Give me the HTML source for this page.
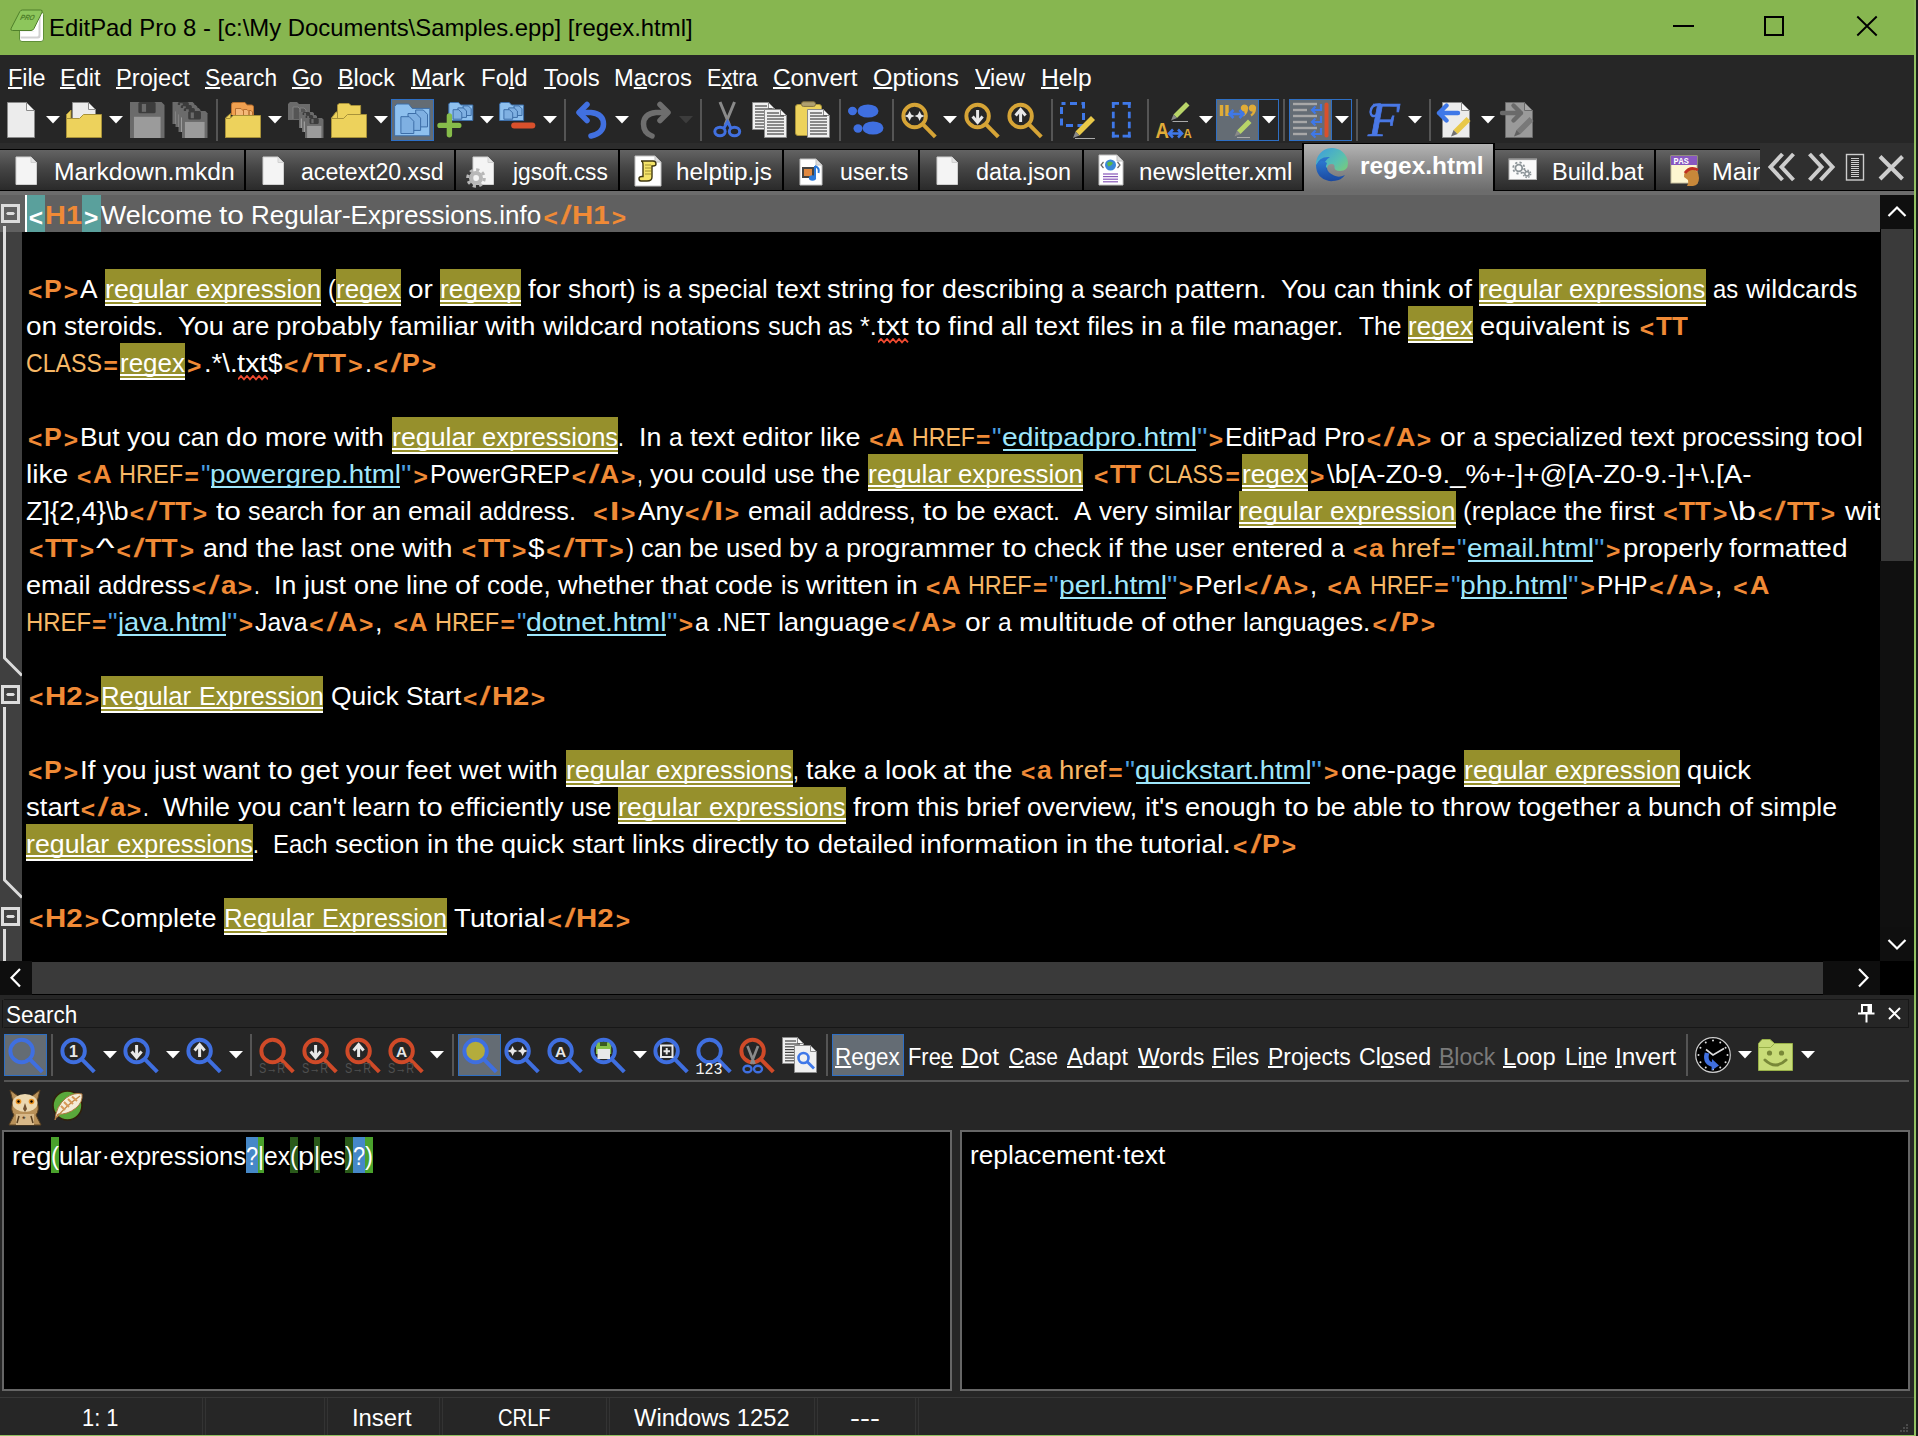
<!DOCTYPE html>
<html><head><meta charset="utf-8"><title>EditPad Pro 8</title><style>
html,body{margin:0;padding:0;background:#262626;}
#r{position:relative;width:1918px;height:1436px;overflow:hidden;background:#262626;font-family:"Liberation Sans", sans-serif;}
#r div,#r svg,#r span.tx{position:absolute;}
#r div{box-sizing:content-box;}
.tx{white-space:pre;transform-origin:0 0;display:block;font-family:"Liberation Sans", sans-serif;}
.mn u{text-decoration:underline;text-decoration-thickness:1.6px;text-underline-offset:1.2px;text-decoration-skip-ink:none;}
</style></head><body><div id="r">
<div style="left:0px;top:0px;width:1918px;height:55px;background:#87b650;"></div>
<div style="left:1914px;top:55px;width:2px;height:1381px;background:#93c162;"></div>
<div style="left:1916px;top:0px;width:2px;height:1436px;background:#1c1c1c;"></div>
<div style="left:1914px;top:0px;width:2px;height:55px;background:#8fbd5c;"></div>
<div style="left:0px;top:1435px;width:1916px;height:1px;background:#93c162;"></div>
<svg style="left:10px;top:9px;" width="36" height="35" viewBox="0 0 36 35"><path d="M11.5 3 H31 Q33.5 3 33.5 5.5 V30 Q33.5 32.5 31 32.5 H12 Q9.5 32.5 9.5 30 V20 Z" fill="#ffffff" stroke="#5f8f38" stroke-width="1"/><path d="M10.5 22.5 H24.5 Q28.5 22 29.5 8 L30.5 6 V27 Q30.5 29.5 28 29.5 H10.5 Z" fill="#d2d2d2"/><path d="M10.5 22.5 H24 Q27.5 22 28.5 9 V26 Q28.5 27.500 27 27.500 H10.5 Z" fill="#ffffff"/><path d="M12.5 1 H30.5 Q33 1 32 3.300 L24 19.500 Q23 21.5 21 21.5 H2.5 Q0 21.5 1.200 19.200 L9.800 2.600 Q10.600 1 12.5 1 Z" fill="#8dc65c" stroke="#4f7f2a" stroke-width="1"/><text x="13" y="11" font-family="Liberation Sans, sans-serif" font-size="7.5" font-weight="700" font-style="italic" fill="#4f7f2a" transform="skewX(-16)" textLength="14" lengthAdjust="spacingAndGlyphs">PRO</text></svg>
<span class="tx " style="left:48.61px;top:11.68px;font-size:24px;line-height:31.2px;font-weight:400;color:#000;transform:scaleX(0.9948);">EditPad Pro 8 - [c:\My Documents\Samples.epp] [regex.html]</span>
<div style="left:1673px;top:25px;width:21px;height:2px;background:#000;"></div>
<div style="left:1764px;top:16px;width:16px;height:16px;border:2px solid #000;background:none"></div>
<svg style="left:1855px;top:14px" width="24" height="24" viewBox="0 0 24 24"><path d="M2.3 2.5 L21.7 21.5 M21.7 2.5 L2.3 21.5" stroke="#000" stroke-width="1.9" fill="none"/></svg>
<span class="tx mn" style="left:7.51px;top:62.58px;font-size:23.5px;line-height:30.55px;font-weight:400;color:#fff;transform:scaleX(0.9919);"><u>F</u>ile</span>
<span class="tx mn" style="left:60.00px;top:62.58px;font-size:23.5px;line-height:30.55px;font-weight:400;color:#fff;"><u>E</u>dit</span>
<span class="tx mn" style="left:115.99px;top:62.58px;font-size:23.5px;line-height:30.55px;font-weight:400;color:#fff;transform:scaleX(1.0054);"><u>P</u>roject</span>
<span class="tx mn" style="left:205.03px;top:62.58px;font-size:23.5px;line-height:30.55px;font-weight:400;color:#fff;transform:scaleX(0.9670);"><u>S</u>earch</span>
<span class="tx mn" style="left:292.03px;top:62.58px;font-size:23.5px;line-height:30.55px;font-weight:400;color:#fff;transform:scaleX(0.9743);"><u>G</u>o</span>
<span class="tx mn" style="left:338.01px;top:62.58px;font-size:23.5px;line-height:30.55px;font-weight:400;color:#fff;transform:scaleX(0.9874);"><u>B</u>lock</span>
<span class="tx mn" style="left:410.97px;top:62.58px;font-size:23.5px;line-height:30.55px;font-weight:400;color:#fff;transform:scaleX(1.0297);"><u>M</u>ark</span>
<span class="tx mn" style="left:480.98px;top:62.58px;font-size:23.5px;line-height:30.55px;font-weight:400;color:#fff;transform:scaleX(1.0196);">Fo<u>l</u>d</span>
<span class="tx mn" style="left:543.50px;top:62.58px;font-size:23.5px;line-height:30.55px;font-weight:400;color:#fff;transform:scaleX(1.0164);"><u>T</u>ools</span>
<span class="tx mn" style="left:613.99px;top:62.58px;font-size:23.5px;line-height:30.55px;font-weight:400;color:#fff;transform:scaleX(1.0094);">M<u>a</u>cros</span>
<span class="tx mn" style="left:706.58px;top:62.58px;font-size:23.5px;line-height:30.55px;font-weight:400;color:#fff;transform:scaleX(0.9219);">E<u>x</u>tra</span>
<span class="tx mn" style="left:772.97px;top:62.58px;font-size:23.5px;line-height:30.55px;font-weight:400;color:#fff;transform:scaleX(1.0275);"><u>C</u>onvert</span>
<span class="tx mn" style="left:872.94px;top:62.58px;font-size:23.5px;line-height:30.55px;font-weight:400;color:#fff;transform:scaleX(1.0601);"><u>O</u>ptions</span>
<span class="tx mn" style="left:975.00px;top:62.58px;font-size:23.5px;line-height:30.55px;font-weight:400;color:#fff;transform:scaleX(0.9895);"><u>V</u>iew</span>
<span class="tx mn" style="left:1041.45px;top:62.58px;font-size:23.5px;line-height:30.55px;font-weight:400;color:#fff;transform:scaleX(1.0474);"><u>H</u>elp</span>
<svg style="left:6px;top:101px;" width="31" height="38" viewBox="0 0 31 38"><path d="M1.5 1.5 H20.5 L28.5 9.5 V36.5 H1.5 Z" fill="#ececec" stroke="#8a8a8a" stroke-width="1"/><path d="M20.5 1.5 V9.5 H28.5 Z" fill="#f6f6f6" stroke="#8a8a8a" stroke-width="1"/></svg>
<svg style="left:46px;top:116px;" width="14" height="8" viewBox="0 0 14 8"><path d="M0 0 H14 L7 7.5 Z" fill="#fff"/></svg>
<svg style="left:65px;top:101px;" width="38" height="38" viewBox="0 0 38 38"><path d="M7.5 1.5 H23.5 L30.5 8.5 V21.5 H7.5 Z" fill="#ececec" stroke="#8a8a8a" stroke-width="1"/><path d="M23.5 1.5 V8.5 H30.5 Z" fill="#f6f6f6" stroke="#8a8a8a" stroke-width="1"/><path d="M1.5 36.5 V13.5 L6 9 V17" fill="#edd25c" stroke="#a8923a"/><path d="M1.5 36.5 V17.5 H14.5 L18.5 13.5 H36.5 V36.5 Z" fill="#edd25c" stroke="#a8923a" stroke-width="1"/></svg>
<svg style="left:109px;top:116px;" width="14" height="8" viewBox="0 0 14 8"><path d="M0 0 H14 L7 7.5 Z" fill="#fff"/></svg>
<svg style="left:129px;top:101px;" width="37" height="38" viewBox="0 0 37 38"><path d="M1 1 H32.542857142857144 L35.5 3.9571428571428573 V37 H1 Z" fill="#6b6b6b"/><rect x="4.942857142857143" y="15.785714285714286" width="26.614285714285714" height="21.214285714285715" fill="#9b9b9b"/><rect x="9.37857142857143" y="1" width="17.25" height="11.335714285714285" rx="1.5" fill="#3c3c3c"/><rect x="12.82857142857143" y="2.9714285714285715" width="4.238571428571428" height="7.885714285714286" fill="#6b6b6b"/></svg>
<svg style="left:171px;top:101px;" width="38" height="38" viewBox="0 0 38 38"><path d="M1.5 1 H21.614285714285714 L23.5 2.8857142857142857 V23 H1.5 Z" fill="#6b6b6b"/><rect x="4.014285714285714" y="10.428571428571429" width="16.97142857142857" height="12.571428571428571" fill="#9b9b9b"/><rect x="6.8428571428571425" y="1" width="11.0" height="7.228571428571429" rx="1.5" fill="#3c3c3c"/><rect x="9.042857142857143" y="2.257142857142857" width="2.702857142857143" height="5.0285714285714285" fill="#6b6b6b"/><path d="M4.5 4 H24.614285714285714 L26.5 5.885714285714286 V26 H4.5 Z" fill="#6b6b6b"/><rect x="7.014285714285714" y="13.428571428571429" width="16.97142857142857" height="12.571428571428571" fill="#9b9b9b"/><rect x="9.842857142857142" y="4" width="11.0" height="7.228571428571429" rx="1.5" fill="#3c3c3c"/><rect x="12.042857142857143" y="5.257142857142857" width="2.702857142857143" height="5.0285714285714285" fill="#6b6b6b"/><path d="M7.5 7 H27.614285714285714 L29.5 8.885714285714286 V31 H7.5 Z" fill="#6b6b6b"/><rect x="10.014285714285714" y="16.42857142857143" width="16.97142857142857" height="14.571428571428571" fill="#9b9b9b"/><rect x="12.842857142857142" y="7" width="11.0" height="7.228571428571429" rx="1.5" fill="#3c3c3c"/><rect x="15.042857142857143" y="8.257142857142856" width="2.702857142857143" height="5.0285714285714285" fill="#6b6b6b"/><path d="M11 10 H34.31428571428572 L36.5 12.185714285714285 V37 H11 Z" fill="#6b6b6b"/><rect x="13.914285714285715" y="20.92857142857143" width="19.67142857142857" height="16.07142857142857" fill="#9b9b9b"/><rect x="17.192857142857143" y="10" width="12.75" height="8.378571428571428" rx="1.5" fill="#3c3c3c"/><rect x="19.74285714285714" y="11.457142857142857" width="3.1328571428571426" height="5.828571428571428" fill="#6b6b6b"/></svg>
<div style="left:216px;top:99px;width:2px;height:42px;background:#555;"></div>
<svg style="left:224px;top:101px;" width="38" height="38" viewBox="0 0 38 38"><path d="M7.5 14 V3.5 Q7.5 1.5 9.5 1.5 H21 L23 4 H27.5 Q29.5 4 29.5 6 V14" fill="#f0a050" stroke="#b87030"/><path d="M11.5 16 V7.5 H17 L19.5 10 V16 M19.5 16 V8.5 H23 L25 10.5 V16 M25 16 V9.5 H27 L28.5 11 V16" fill="#f4b878" stroke="#b87030" stroke-width="1"/><path d="M1.5 36.5 V17 L6.5 12.5 V17" fill="#edd25c" stroke="#a8923a"/><path d="M1.5 36.5 V17.5 H6 L9 14.5 H36.5 V36.5 Z" fill="#edd25c" stroke="#a8923a" stroke-width="1"/></svg>
<svg style="left:267.5px;top:116px;" width="14" height="8" viewBox="0 0 14 8"><path d="M0 0 H14 L7 7.5 Z" fill="#fff"/></svg>
<svg style="left:287px;top:101px;" width="38" height="38" viewBox="0 0 38 38"><path d="M1 19 V3 L3 1 H10 L12 3 H23 V19 Z" fill="#6b6b6b"/><path d="M6 18 V6 H11 L13 8 V18 M13 18 V7 H17 L19 9 V18" fill="#555" stroke="#808080" stroke-width="1"/><path d="M12 11 H25.714285714285715 L27 12.285714285714285 V27 H12 Z" fill="#6b6b6b"/><rect x="13.714285714285714" y="17.428571428571427" width="11.571428571428571" height="9.571428571428573" fill="#9b9b9b"/><rect x="15.642857142857142" y="11" width="7.5" height="4.928571428571428" rx="1.5" fill="#3c3c3c"/><rect x="17.142857142857142" y="11.857142857142858" width="1.8428571428571427" height="3.4285714285714284" fill="#6b6b6b"/><path d="M15 14 H28.714285714285715 L30 15.285714285714285 V31 H15 Z" fill="#6b6b6b"/><rect x="16.714285714285715" y="20.428571428571427" width="11.571428571428571" height="10.571428571428573" fill="#9b9b9b"/><rect x="18.642857142857142" y="14" width="7.5" height="4.928571428571428" rx="1.5" fill="#3c3c3c"/><rect x="20.142857142857142" y="14.857142857142858" width="1.8428571428571427" height="3.4285714285714284" fill="#6b6b6b"/><path d="M18 17 H34.91428571428571 L36.5 18.585714285714285 V37 H18 Z" fill="#6b6b6b"/><rect x="20.114285714285714" y="24.92857142857143" width="14.271428571428572" height="12.071428571428571" fill="#9b9b9b"/><rect x="22.492857142857144" y="17" width="9.25" height="6.078571428571428" rx="1.5" fill="#3c3c3c"/><rect x="24.34285714285714" y="18.057142857142857" width="2.2728571428571427" height="4.228571428571429" fill="#6b6b6b"/></svg>
<svg style="left:330px;top:101px;" width="38" height="38" viewBox="0 0 38 38"><path d="M7.5 18 V4 L9 2.500 H19 L21 4.500 H30.600 V16 Z" fill="#edd25c" stroke="#a8923a"/><path d="M1.500 36.500 V17 L6 11 H7.500 V17" fill="#edd25c" stroke="#a8923a"/><path d="M1.500 36.500 V17.500 H13.500 L17.500 13.500 H36.500 V36.500 Z" fill="#edd25c" stroke="#a8923a" stroke-width="1"/></svg>
<svg style="left:374px;top:116px;" width="14" height="8" viewBox="0 0 14 8"><path d="M0 0 H14 L7 7.5 Z" fill="#fff"/></svg>
<div style="left:391px;top:99px;width:43px;height:42px;background:#646c74;box-sizing:border-box;border:1.5px solid #2e6fc4;"></div>
<svg style="left:393px;top:102px;" width="38" height="37" viewBox="0 0 38 37"><path d="M1.6 33.8 V4.5 L3.7 2.0 H15.7 L19.2 6.4 H36.8 V33.8 Z" fill="#8ec0ee" stroke="#3d6ea8" stroke-width="1"/><path d="M22.7 8.0 H30.3 L34.5 12.3 V24.9 H22.7 Z" fill="#7fb0e2" stroke="#3d6ea8" stroke-width="1"/><path d="M15.0 11.5 H23.1 L27.6 16.1 V28.4 H15.0 Z" fill="#7fb0e2" stroke="#3d6ea8" stroke-width="1"/><path d="M7.9 14.7 H16.2 L20.8 19.3 V31.5 H7.9 Z" fill="#7fb0e2" stroke="#3d6ea8" stroke-width="1"/></svg>
<svg style="left:436px;top:101px;" width="38" height="38" viewBox="0 0 38 38"><path d="M12.8 19.5 V2.9 L14.2 1.5 H22.4 L24.8 4.0 H36.8 V19.5 Z" fill="#8ec0ee" stroke="#3d6ea8" stroke-width="1"/><path d="M27.1 4.9 H32.3 L35.2 7.8 V14.5 H27.1 Z" fill="#7fb0e2" stroke="#3d6ea8" stroke-width="1"/><path d="M21.9 6.9 H27.4 L30.5 10.0 V16.4 H21.9 Z" fill="#7fb0e2" stroke="#3d6ea8" stroke-width="1"/><path d="M17.1 8.7 H22.7 L25.8 11.9 V18.2 H17.1 Z" fill="#7fb0e2" stroke="#3d6ea8" stroke-width="1"/><path d="M13.4 15 V33.700 M4 24.400 H22.800" stroke="#86bc4a" stroke-width="5.4" stroke-linecap="round"/></svg>
<svg style="left:480px;top:116px;" width="14" height="8" viewBox="0 0 14 8"><path d="M0 0 H14 L7 7.5 Z" fill="#fff"/></svg>
<svg style="left:499px;top:101px;" width="38" height="38" viewBox="0 0 38 38"><path d="M0.6 19.5 V2.9 L2.0 1.5 H10.2 L12.6 4.0 H24.6 V19.5 Z" fill="#8ec0ee" stroke="#3d6ea8" stroke-width="1"/><path d="M15.0 4.9 H20.1 L23.0 7.8 V14.5 H15.0 Z" fill="#7fb0e2" stroke="#3d6ea8" stroke-width="1"/><path d="M9.7 6.9 H15.2 L18.4 10.0 V16.4 H9.7 Z" fill="#7fb0e2" stroke="#3d6ea8" stroke-width="1"/><path d="M4.9 8.7 H10.5 L13.7 11.9 V18.2 H4.9 Z" fill="#7fb0e2" stroke="#3d6ea8" stroke-width="1"/><path d="M15.200 24.500 H33.300" stroke="#d8502c" stroke-width="6" stroke-linecap="round"/></svg>
<svg style="left:542.5px;top:116px;" width="14" height="8" viewBox="0 0 14 8"><path d="M0 0 H14 L7 7.5 Z" fill="#fff"/></svg>
<div style="left:564px;top:99px;width:2px;height:42px;background:#555;"></div>
<svg style="left:574px;top:100px;" width="36" height="40" viewBox="0 0 36 40"><path d="M13 4.5 L5 12.5 L13 20.5" stroke="#4170e0" stroke-width="5.5" fill="none" stroke-linecap="round" stroke-linejoin="round"/><path d="M6 12.5 H17 Q29.5 14 29.5 24 Q29.5 33 17 36" stroke="#4170e0" stroke-width="5.5" fill="none" stroke-linecap="round"/></svg>
<svg style="left:615px;top:116px;" width="14" height="8" viewBox="0 0 14 8"><path d="M0 0 H14 L7 7.5 Z" fill="#fff"/></svg>
<svg style="left:637px;top:100px;" width="36" height="40" viewBox="0 0 36 40"><path d="M23 4.5 L31 12.5 L23 20.5" stroke="#6e6e6e" stroke-width="5.5" fill="none" stroke-linecap="round" stroke-linejoin="round"/><path d="M30 12.5 H19 Q6.5 14 6.5 24 Q6.5 33 15 36" stroke="#6e6e6e" stroke-width="5.5" fill="none" stroke-linecap="round"/></svg>
<svg style="left:679px;top:116px;" width="14" height="8" viewBox="0 0 14 8"><path d="M0 0 H14 L7 7.5 Z" fill="#3c3c3c"/></svg>
<div style="left:700px;top:99px;width:2px;height:42px;background:#555;"></div>
<svg style="left:712px;top:101px;" width="31" height="38" viewBox="0 0 31 38"><path d="M8 1 L17.5 24 M22.5 1 L13 24" stroke="#8a8a8a" stroke-width="3"/><ellipse cx="8" cy="30.5" rx="5.2" ry="4.2" fill="none" stroke="#4170e0" stroke-width="3"/><ellipse cx="22.5" cy="30.5" rx="5.2" ry="4.2" fill="none" stroke="#4170e0" stroke-width="3"/><path d="M12 27 L15.5 21 L19 27" stroke="#4170e0" stroke-width="3" fill="none"/></svg>
<svg style="left:751px;top:101px;" width="38" height="38" viewBox="0 0 38 38"><path d="M1.5 1.5 H17.5 L23.5 7.5 V28.5 H1.5 Z" fill="#f0f0f0" stroke="#8a8a8a" stroke-width="1"/><path d="M17.5 1.5 V7.5 H23.5 Z" fill="#f6f6f6" stroke="#8a8a8a" stroke-width="1"/><path d="M4 5 H16" stroke="#444" stroke-width="1.2"/><path d="M4 8 H21" stroke="#444" stroke-width="1.2"/><path d="M4 11 H21" stroke="#444" stroke-width="1.2"/><path d="M4 14 H21" stroke="#444" stroke-width="1.2"/><path d="M4 17 H21" stroke="#444" stroke-width="1.2"/><path d="M4 20 H21" stroke="#444" stroke-width="1.2"/><path d="M4 23 H21" stroke="#444" stroke-width="1.2"/><path d="M4 26 H21" stroke="#444" stroke-width="1.2"/><path d="M13.5 8.5 H29.5 L35.5 14.5 V36.5 H13.5 Z" fill="#f0f0f0" stroke="#8a8a8a" stroke-width="1"/><path d="M29.5 8.5 V14.5 H35.5 Z" fill="#f6f6f6" stroke="#8a8a8a" stroke-width="1"/><path d="M16 12 H28" stroke="#444" stroke-width="1.2"/><path d="M16 15 H33" stroke="#444" stroke-width="1.2"/><path d="M16 18 H33" stroke="#444" stroke-width="1.2"/><path d="M16 21 H33" stroke="#444" stroke-width="1.2"/><path d="M16 24 H33" stroke="#444" stroke-width="1.2"/><path d="M16 27 H33" stroke="#444" stroke-width="1.2"/><path d="M16 30 H33" stroke="#444" stroke-width="1.2"/><path d="M16 33 H33" stroke="#444" stroke-width="1.2"/></svg>
<svg style="left:794px;top:101px;" width="38" height="38" viewBox="0 0 38 38"><rect x="1.5" y="3.5" width="26" height="31" rx="2.5" fill="#edd25c" stroke="#a8923a"/><rect x="7.5" y="0.8" width="14" height="4.6" rx="2" fill="#b0a070" stroke="#807040"/><path d="M13.5 8.5 H29.5 L35.5 14.5 V36.5 H13.5 Z" fill="#f0f0f0" stroke="#8a8a8a" stroke-width="1"/><path d="M29.5 8.5 V14.5 H35.5 Z" fill="#f6f6f6" stroke="#8a8a8a" stroke-width="1"/><path d="M16 12 H28" stroke="#444" stroke-width="1.2"/><path d="M16 15 H33" stroke="#444" stroke-width="1.2"/><path d="M16 18 H33" stroke="#444" stroke-width="1.2"/><path d="M16 21 H33" stroke="#444" stroke-width="1.2"/><path d="M16 24 H33" stroke="#444" stroke-width="1.2"/><path d="M16 27 H33" stroke="#444" stroke-width="1.2"/><path d="M16 30 H33" stroke="#444" stroke-width="1.2"/><path d="M16 33 H33" stroke="#444" stroke-width="1.2"/></svg>
<div style="left:839px;top:99px;width:2px;height:42px;background:#555;"></div>
<svg style="left:847px;top:102px;" width="38" height="37" viewBox="0 0 38 37"><ellipse cx="21" cy="9" rx="10.5" ry="6.6" fill="#3f6fe0"/><ellipse cx="5.5" cy="9" rx="4.5" ry="4.2" fill="#3f6fe0"/><ellipse cx="26" cy="26" rx="10.5" ry="6.6" fill="#3f6fe0"/><ellipse cx="11" cy="26.5" rx="4.5" ry="4.2" fill="#3f6fe0"/></svg>
<div style="left:892px;top:99px;width:2px;height:42px;background:#555;"></div>
<svg style="left:901px;top:102px;" width="37" height="37" viewBox="0 0 37 37"><circle cx="13.6" cy="14" r="11.25" fill="none" stroke="#d6a436" stroke-width="3.9"/><path d="M22 22.4 L34.3 34.8" stroke="#d6a436" stroke-width="4.0" stroke-linecap="butt"/><path d="M8.6 9 L10.2 12.4 L13.6 14 L10.2 15.6 L8.6 19 L7.0 15.6 L3.5999999999999996 14 L7.0 12.4 Z" fill="#e8e8e8"/><path d="M18.6 9 L20.200000000000003 12.4 L23.6 14 L20.200000000000003 15.6 L18.6 19 L17.0 15.6 L13.600000000000001 14 L17.0 12.4 Z" fill="#e8e8e8"/></svg>
<svg style="left:943px;top:116px;" width="14" height="8" viewBox="0 0 14 8"><path d="M0 0 H14 L7 7.5 Z" fill="#fff"/></svg>
<svg style="left:964px;top:102px;" width="37" height="37" viewBox="0 0 37 37"><circle cx="13.6" cy="14" r="11.25" fill="none" stroke="#d6a436" stroke-width="3.9"/><path d="M22 22.4 L34.3 34.8" stroke="#d6a436" stroke-width="4.0" stroke-linecap="butt"/><path d="M13.6 8.0 V19.0" stroke="#e8e8e8" stroke-width="3"/><path d="M8.6 14.5 L13.6 20.5 L18.6 14.5" stroke="#e8e8e8" stroke-width="3" fill="none"/></svg>
<svg style="left:1007px;top:102px;" width="37" height="37" viewBox="0 0 37 37"><circle cx="13.6" cy="14" r="11.25" fill="none" stroke="#d6a436" stroke-width="3.9"/><path d="M22 22.4 L34.3 34.8" stroke="#d6a436" stroke-width="4.0" stroke-linecap="butt"/><path d="M13.6 20.0 V9.0" stroke="#e8e8e8" stroke-width="3"/><path d="M8.6 13.5 L13.6 7.5 L18.6 13.5" stroke="#e8e8e8" stroke-width="3" fill="none"/></svg>
<div style="left:1051px;top:99px;width:2px;height:42px;background:#555;"></div>
<svg style="left:1059px;top:101px;" width="38" height="38" viewBox="0 0 38 38"><path d="M2.5 2.5 H24.5 V24.5 H2.5 Z" fill="none" stroke="#3f78e8" stroke-width="3" stroke-dasharray="7 4.5" stroke-dashoffset="3"/><path d="M32 15 L36 19 L20.5 34.5 L16.5 30.5 Z" fill="#e8c848"/><path d="M16.5 30.5 L20.5 34.5 L14 37 Z" fill="#8a8a8a"/><path d="M16 37.5 H36" stroke="#aaa" stroke-width="1"/></svg>
<svg style="left:1110px;top:101px;" width="22" height="38" viewBox="0 0 22 38"><path d="M3.3 1 V7" stroke="#3f78e8" stroke-width="2.8"/><path d="M3.3 10.7 V17.3" stroke="#3f78e8" stroke-width="2.8"/><path d="M3.3 20.7 V27.3" stroke="#3f78e8" stroke-width="2.8"/><path d="M3.3 30.7 V36.5" stroke="#3f78e8" stroke-width="2.8"/><path d="M19.3 1 V7" stroke="#3f78e8" stroke-width="2.8"/><path d="M19.3 10.7 V17.3" stroke="#3f78e8" stroke-width="2.8"/><path d="M19.3 20.7 V27.3" stroke="#3f78e8" stroke-width="2.8"/><path d="M19.3 30.7 V36.5" stroke="#3f78e8" stroke-width="2.8"/><path d="M1.9 2.4 H9" stroke="#3f78e8" stroke-width="2.8"/><path d="M12.6 2.4 H20.7" stroke="#3f78e8" stroke-width="2.8"/><path d="M1.9 35.1 H9" stroke="#3f78e8" stroke-width="2.8"/><path d="M12.6 35.1 H20.7" stroke="#3f78e8" stroke-width="2.8"/></svg>
<div style="left:1147px;top:99px;width:2px;height:42px;background:#555;"></div>
<svg style="left:1155px;top:101px;" width="38" height="38" viewBox="0 0 38 38"><path d="M31 1 L34.5 4.5 L22 17 L18.5 13.5 Z" fill="#b8d468"/><path d="M18.5 13.5 L22 17 L16 19.5 Z" fill="#8a8a8a"/><path d="M17.5 20.5 H33" stroke="#aaa" stroke-width="1"/><text x="0.5" y="37.3" font-family="Liberation Sans, sans-serif" font-size="21.5" font-weight="700" fill="#e0ac38" textLength="13.5" lengthAdjust="spacingAndGlyphs">A</text><text x="28.3" y="37.3" font-family="Liberation Sans, sans-serif" font-size="13" font-weight="700" fill="#e0ac38" textLength="8.5" lengthAdjust="spacingAndGlyphs">A</text><path d="M15 32.5 H26 M18 28.5 L14 32.5 L18 36.5 M23 28.5 L27 32.5 L23 36.5" stroke="#3f78e8" stroke-width="2.6" fill="none"/></svg>
<svg style="left:1199px;top:116px;" width="14" height="8" viewBox="0 0 14 8"><path d="M0 0 H14 L7 7.5 Z" fill="#fff"/></svg>
<div style="left:1216px;top:99px;width:63px;height:42px;background:#262626;box-sizing:border-box;border:1.5px solid #2e6fc4;"></div>
<div style="left:1216px;top:99px;width:43px;height:42px;background:#646c74;box-sizing:border-box;border:1.5px solid #2e6fc4;"></div>
<svg style="left:1218px;top:101px;" width="40" height="38" viewBox="0 0 40 38"><path d="M3.5 4 V15 M9 4 V15" stroke="#e0ac38" stroke-width="3.4"/><path d="M26.5 4.5 a2.6 2.6 0 1 1 -0.1 0 M29 7 Q29 12 25 14.5 M34.500 4.500 a2.6 2.6 0 1 1 -0.1 0 M37 7 Q37 12 33 14.5" stroke="#e0ac38" stroke-width="2.2" fill="#e0ac38"/><path d="M12.5 13 H24.5 M15.5 9 L11.5 13 L15.5 17 M21.5 9 L25.5 13 L21.5 17" stroke="#3f78e8" stroke-width="2.6" fill="none"/><path d="M30 18.5 L33.5 22 L22.5 33 L19 29.5 Z" fill="#b8d468"/><path d="M19 29.5 L22.500 33 L16.5 35.5 Z" fill="#8a8a8a"/><path d="M19 36.5 H32" stroke="#aaa" stroke-width="1"/></svg>
<svg style="left:1262px;top:116px;" width="14" height="8" viewBox="0 0 14 8"><path d="M0 0 H14 L7 7.5 Z" fill="#fff"/></svg>
<div style="left:1283px;top:99px;width:2px;height:42px;background:#555;"></div>
<div style="left:1289px;top:99px;width:63px;height:42px;background:#262626;box-sizing:border-box;border:1.5px solid #2e6fc4;"></div>
<div style="left:1289px;top:99px;width:43px;height:42px;background:#646c74;box-sizing:border-box;border:1.5px solid #2e6fc4;"></div>
<svg style="left:1291px;top:101px;" width="40" height="38" viewBox="0 0 40 38"><path d="M2 3 H26" stroke="#a8a8a8" stroke-width="2.4"/><path d="M2 9 H16" stroke="#a8a8a8" stroke-width="2.4"/><path d="M2 15 H26" stroke="#a8a8a8" stroke-width="2.4"/><path d="M2 21 H16" stroke="#a8a8a8" stroke-width="2.4"/><path d="M2 27 H26" stroke="#a8a8a8" stroke-width="2.4"/><path d="M2 33 H16" stroke="#a8a8a8" stroke-width="2.4"/><path d="M30 3 V9 H21 M24.5 5.5 L21 9 L24.5 12.5" stroke="#3f78e8" stroke-width="2.2" fill="none"/><path d="M30 15 V21 H21 M24.5 17.5 L21 21 L24.5 24.5" stroke="#3f78e8" stroke-width="2.2" fill="none"/><path d="M30 27 V33 H21 M24.5 29.5 L21 33 L24.5 36.5" stroke="#3f78e8" stroke-width="2.2" fill="none"/><path d="M35.5 3.500 V34.500" stroke="#d8502c" stroke-width="4" stroke-linecap="round"/></svg>
<svg style="left:1335px;top:116px;" width="14" height="8" viewBox="0 0 14 8"><path d="M0 0 H14 L7 7.5 Z" fill="#fff"/></svg>
<div style="left:1356px;top:99px;width:2px;height:42px;background:#555;"></div>
<span class="tx" style="left:1368px;top:92px;font-family:'Liberation Serif',serif;font-style:italic;font-weight:400;font-size:48px;line-height:56px;color:#4a78e6;transform:scaleX(1.08);-webkit-text-stroke:0.7px #4a78e6">F</span>
<svg style="left:1367px;top:101px;" width="16" height="20" viewBox="0 0 16 20"><path d="M13 3.500 Q4 3 3.500 11 Q4 16.500 9 14.500" stroke="#4a78e6" stroke-width="2.400" fill="none" stroke-linecap="round"/></svg>
<svg style="left:1407.5px;top:116px;" width="14" height="8" viewBox="0 0 14 8"><path d="M0 0 H14 L7 7.5 Z" fill="#fff"/></svg>
<div style="left:1429px;top:99px;width:2px;height:42px;background:#555;"></div>
<svg style="left:1436px;top:101px;" width="38" height="38" viewBox="0 0 38 38"><path d="M6.5 1.5 H25.5 L33.5 9.5 V36.5 H6.5 Z" fill="#ececec" stroke="#8a8a8a" stroke-width="1"/><path d="M25.5 1.5 V9.5 H33.5 Z" fill="#f6f6f6" stroke="#8a8a8a" stroke-width="1"/><path d="M3 12 H22 M10.500 4.500 L3 12 L10.5 19.5" stroke="#3f78e8" stroke-width="4.4" fill="none" stroke-linecap="round" stroke-linejoin="round"/><path d="M30.5 16 L34.5 20 L21.5 33 L17.5 29 Z" fill="#e8c848"/><path d="M17.5 29 L21.5 33 L15 35.5 Z" fill="#707070"/></svg>
<svg style="left:1481px;top:116px;" width="14" height="8" viewBox="0 0 14 8"><path d="M0 0 H14 L7 7.5 Z" fill="#fff"/></svg>
<svg style="left:1499px;top:101px;" width="38" height="38" viewBox="0 0 38 38"><path d="M6.5 1.5 H25.5 L33.5 9.5 V36.5 H6.5 Z" fill="#9a9a9a" stroke="#6a6a6a" stroke-width="1"/><path d="M25.5 1.5 V9.5 H33.5 Z" fill="#a8a8a8" stroke="#6a6a6a" stroke-width="1"/><path d="M3 12 H22 M14.500 4.500 L22 12 L14.5 19.5" stroke="#6a6a6a" stroke-width="4.4" fill="none" stroke-linecap="round" stroke-linejoin="round"/><path d="M30.5 16 L34.5 20 L21.5 33 L17.5 29 Z" fill="#787878"/><path d="M17.5 29 L21.5 33 L15 35.5 Z" fill="#606060"/></svg>
<div style="left:0px;top:143px;width:1914px;height:48px;background:#2c2c2c;"></div>
<div style="left:0px;top:149px;width:1760px;height:1px;background:#000;"></div>
<div style="left:0px;top:190px;width:1914px;height:1px;background:#000;"></div>
<div style="left:0px;top:150px;width:244px;height:40px;background:none;background:linear-gradient(#636363,#454545 45%,#2a2a2a);"></div>
<div style="left:246px;top:150px;width:207.5px;height:40px;background:none;background:linear-gradient(#636363,#454545 45%,#2a2a2a);"></div>
<div style="left:455.5px;top:150px;width:162.0px;height:40px;background:none;background:linear-gradient(#636363,#454545 45%,#2a2a2a);"></div>
<div style="left:619.5px;top:150px;width:162.0px;height:40px;background:none;background:linear-gradient(#636363,#454545 45%,#2a2a2a);"></div>
<div style="left:783.5px;top:150px;width:134.0px;height:40px;background:none;background:linear-gradient(#636363,#454545 45%,#2a2a2a);"></div>
<div style="left:919.5px;top:150px;width:162.0px;height:40px;background:none;background:linear-gradient(#636363,#454545 45%,#2a2a2a);"></div>
<div style="left:1083.5px;top:150px;width:218.5px;height:40px;background:none;background:linear-gradient(#636363,#454545 45%,#2a2a2a);"></div>
<div style="left:1495px;top:150px;width:159px;height:40px;background:none;background:linear-gradient(#636363,#454545 45%,#2a2a2a);"></div>
<div style="left:1656px;top:150px;width:104px;height:40px;background:none;background:linear-gradient(#636363,#454545 45%,#2a2a2a);"></div>
<div style="left:244px;top:150px;width:2px;height:40px;background:#000;"></div>
<div style="left:453.5px;top:150px;width:2px;height:40px;background:#000;"></div>
<div style="left:617.5px;top:150px;width:2px;height:40px;background:#000;"></div>
<div style="left:781.5px;top:150px;width:2px;height:40px;background:#000;"></div>
<div style="left:917.5px;top:150px;width:2px;height:40px;background:#000;"></div>
<div style="left:1081.5px;top:150px;width:2px;height:40px;background:#000;"></div>
<div style="left:1654px;top:150px;width:2px;height:40px;background:#000;"></div>
<div style="left:1302px;top:143px;width:193px;height:48px;background:#000;"></div>
<div style="left:1304px;top:144px;width:189px;height:47px;background:none;background:linear-gradient(#b4b4b4,#8c8c8c 50%,#6c6c6c);"></div>
<div style="left:1760px;top:143px;width:154px;height:47px;background:#2f2f2f;"></div>
<span class="tx " style="left:53.95px;top:156.58px;font-size:23.5px;line-height:30.55px;font-weight:400;color:#fff;transform:scaleX(1.0480);">Markdown.mkdn</span>
<span class="tx " style="left:301.02px;top:156.58px;font-size:23.5px;line-height:30.55px;font-weight:400;color:#fff;transform:scaleX(0.9830);">acetext20.xsd</span>
<span class="tx " style="left:512.97px;top:156.58px;font-size:23.5px;line-height:30.55px;font-weight:400;color:#fff;transform:scaleX(0.9674);">jgsoft.css</span>
<span class="tx " style="left:675.97px;top:156.58px;font-size:23.5px;line-height:30.55px;font-weight:400;color:#fff;transform:scaleX(1.0330);">helptip.js</span>
<span class="tx " style="left:839.51px;top:156.58px;font-size:23.5px;line-height:30.55px;font-weight:400;color:#fff;transform:scaleX(0.9855);">user.ts</span>
<span class="tx " style="left:976.00px;top:156.58px;font-size:23.5px;line-height:30.55px;font-weight:400;color:#fff;transform:scaleX(0.9967);">data.json</span>
<span class="tx " style="left:1138.97px;top:156.58px;font-size:23.5px;line-height:30.55px;font-weight:400;color:#fff;transform:scaleX(1.0296);">newsletter.xml</span>
<span class="tx " style="left:1552.00px;top:156.58px;font-size:23.5px;line-height:30.55px;font-weight:400;color:#fff;">Build.bat</span>
<div style="left:1656px;top:150px;width:104px;height:40px;overflow:hidden;background:none">
<span class="tx " style="left:56.00px;top:6.58px;font-size:23.5px;line-height:30.55px;font-weight:400;color:#fff;transform:scaleX(1.0601);">Main</span>
</div>
<span class="tx " style="left:1359.96px;top:150.58px;font-size:23.5px;line-height:30.55px;font-weight:700;color:#fff;transform:scaleX(1.0403);">regex.html</span>
<svg style="left:15px;top:156px;" width="22.5" height="29.5" viewBox="0 0 22.5 29.5"><path d="M1 1 H16.0 L21.5 6.5 V28.5 H1 Z" fill="#f4f4f4" stroke="#d0d0d0" stroke-width="1"/><path d="M16.0 1 V6.5 H21.5 Z" fill="#e4e4e4" stroke="#d0d0d0" stroke-width="1"/></svg>
<svg style="left:262px;top:156px;" width="22.5" height="29.5" viewBox="0 0 22.5 29.5"><path d="M1 1 H16.0 L21.5 6.5 V28.5 H1 Z" fill="#f4f4f4" stroke="#d0d0d0" stroke-width="1"/><path d="M16.0 1 V6.5 H21.5 Z" fill="#e4e4e4" stroke="#d0d0d0" stroke-width="1"/></svg>
<svg style="left:472px;top:156px;" width="22.5" height="29.5" viewBox="0 0 22.5 29.5"><path d="M1 1 H16.0 L21.5 6.5 V28.5 H1 Z" fill="#f4f4f4" stroke="#d0d0d0" stroke-width="1"/><path d="M16.0 1 V6.5 H21.5 Z" fill="#e4e4e4" stroke="#d0d0d0" stroke-width="1"/></svg>
<svg style="left:466px;top:168px;" width="20" height="20" viewBox="0 0 20 20"><circle cx="10" cy="10" r="5" fill="none" stroke="#b8b8b8" stroke-width="4"/><circle cx="10" cy="10" r="8.3" fill="none" stroke="#b8b8b8" stroke-width="3" stroke-dasharray="3.2 3.3"/></svg>
<svg style="left:634px;top:155px;" width="29" height="32" viewBox="0 0 29 32"><path d="M1 1 H21 L27 7 V31 H1 Z" fill="#fff" stroke="#c0c0c0" stroke-width="1"/><path d="M21 1 V7 H27 Z" fill="#ddd" stroke="#c0c0c0" stroke-width="1"/><path d="M7 6 H19 Q22 6 22 9 Q22 11 19 11 H18 V22 Q18 26 13 26 H7 Q5 26 5 23.5 Q5 21.5 8 21.5 H9 V10 Q9 6 7 6 Z" fill="#f4e468" stroke="#403810" stroke-width="1.4"/><path d="M11 10 H17" stroke="#a09030" stroke-width="1"/><path d="M11 13 H17" stroke="#a09030" stroke-width="1"/><path d="M11 16 H17" stroke="#a09030" stroke-width="1"/><path d="M11 19 H17" stroke="#a09030" stroke-width="1"/></svg>
<svg style="left:799px;top:158px;" width="25" height="28" viewBox="0 0 25 28"><path d="M1 1 H17 L23 7 V27 H1 Z" fill="#fff" stroke="#c0c0c0" stroke-width="1"/><path d="M17 1 V7 H23 Z" fill="#ddd" stroke="#c0c0c0" stroke-width="1"/><rect x="3" y="9" width="12" height="11" fill="#444"/><rect x="5" y="11" width="8" height="7" fill="#e08840"/><path d="M16 8 V19" stroke="#2a78d8" stroke-width="2"/><ellipse cx="13.5" cy="20" rx="3.6" ry="2.8" fill="#2a78d8"/><path d="M16 8 Q21 10 19.500 15" stroke="#2a78d8" stroke-width="2" fill="none"/></svg>
<svg style="left:936px;top:156px;" width="22.5" height="29.5" viewBox="0 0 22.5 29.5"><path d="M1 1 H16.0 L21.5 6.5 V28.5 H1 Z" fill="#f4f4f4" stroke="#d0d0d0" stroke-width="1"/><path d="M16.0 1 V6.5 H21.5 Z" fill="#e4e4e4" stroke="#d0d0d0" stroke-width="1"/></svg>
<svg style="left:1098px;top:154px;" width="27" height="32" viewBox="0 0 27 32"><path d="M1 1 H19 L25 7 V31 H1 Z" fill="#fff" stroke="#c0c0c0" stroke-width="1"/><path d="M19 1 V7 H25 Z" fill="#ddd" stroke="#c0c0c0" stroke-width="1"/><circle cx="12.500" cy="11" r="5.5" fill="#3a88d8"/><path d="M9 9 Q12 6 15 9 Q13 13 10 12 Z" fill="#58b848"/><path d="M5.5 8 L3 11 L5.5 14 M19.5 8 L22 11 L19.5 14" stroke="#666" stroke-width="1.2" fill="none"/><path d="M5 20.0 H20" stroke="#8858b8" stroke-width="1.2"/><path d="M5 22.6 H20" stroke="#8858b8" stroke-width="1.2"/><path d="M5 25.2 H20" stroke="#8858b8" stroke-width="1.2"/><path d="M5 27.8 H20" stroke="#8858b8" stroke-width="1.2"/></svg>
<svg style="left:1315px;top:148px;" width="34" height="34" viewBox="0 0 34 34"><defs><linearGradient id="eg1" x1="0" y1="0" x2="1" y2="1"><stop offset="0" stop-color="#3a9be0"/><stop offset="0.55" stop-color="#58c0b0"/><stop offset="1" stop-color="#8ad060"/></linearGradient><linearGradient id="eg2" x1="0" y1="0" x2="0" y2="1"><stop offset="0" stop-color="#2c78d0"/><stop offset="1" stop-color="#1a48a0"/></linearGradient></defs><path d="M1 17 A16 16 0 0 1 33 15 Q33 23 25 23 Q19 23 19.500 19 Q20 16 17 16 Q12 16 12 21 Q12 28 20 30 Q8 33 1 17 Z" fill="url(#eg1)"/><path d="M1.200 18 Q4 8 15 9 Q8 13 8.500 21 Q9 31 20 32.500 Q26 32.500 30 27 Q24 30 19 27.500 Q12 24 12 20 Q5 12 1.200 18 Z" fill="url(#eg2)"/><path d="M1 17 Q1 30 14 33 Q22 34 29 28 Q20 32 13.500 26 Q9 21 12 15 Q6 10 1 17 Z" fill="url(#eg2)"/></svg>
<svg style="left:1508px;top:158px;" width="30" height="23" viewBox="0 0 30 23"><rect x="1" y="1" width="27.500" height="20.500" fill="#fafafa" stroke="#b4b4b4"/><path d="M1 1.500 H28.500" stroke="#999" stroke-width="1.200"/><circle cx="10.800" cy="10" r="3.400" fill="none" stroke="#8c9498" stroke-width="1.800"/><circle cx="10.800" cy="10" r="5.600" fill="none" stroke="#8c9498" stroke-width="1.800" stroke-dasharray="2.200 2.200"/><circle cx="19" cy="15.800" r="2.200" fill="none" stroke="#8c9498" stroke-width="1.600"/><circle cx="19" cy="15.800" r="3.700" fill="none" stroke="#8c9498" stroke-width="1.400" stroke-dasharray="1.500 1.400"/></svg>
<svg style="left:1670px;top:155px;" width="31" height="32" viewBox="0 0 31 32"><rect x="1" y="1" width="26" height="27" fill="#fdf6d0" stroke="#c8c0a0"/><rect x="1" y="1" width="26" height="9" fill="#8858c0"/><text x="3.500" y="8.500" font-family="Liberation Mono, monospace" font-size="8.500" font-weight="700" fill="#fff">PAS</text><path d="M14 22 Q14 13 22 14 Q29 15 29 23 Q29 30 23 31 L17 31 Q19 28 18 25 Z" fill="#c8883a"/><path d="M15 18 Q20 11 28 15" stroke="#c03020" stroke-width="3" fill="none"/></svg>
<svg style="left:1766px;top:150px;" width="32" height="34" viewBox="0 0 32 34"><path d="M16.500 4 L4.500 17 L16.500 30 M27.500 4 L15.500 17 L27.500 30" stroke="#cdcdcd" stroke-width="4" fill="none"/></svg>
<svg style="left:1805px;top:150px;" width="32" height="34" viewBox="0 0 32 34"><path d="M4.500 4 L16.500 17 L4.500 30 M15.500 4 L27.500 17 L15.500 30" stroke="#cdcdcd" stroke-width="4" fill="none"/></svg>
<svg style="left:1845px;top:153px;" width="20" height="28" viewBox="0 0 20 28"><rect x="1.500" y="1.500" width="17" height="25.500" fill="none" stroke="#cdcdcd" stroke-width="1.400"/><path d="M6 5.5 H14" stroke="#cdcdcd" stroke-width="1"/><path d="M6 7.5 H14" stroke="#cdcdcd" stroke-width="1"/><path d="M6 9.5 H14" stroke="#cdcdcd" stroke-width="1"/><path d="M6 11.5 H14" stroke="#cdcdcd" stroke-width="1"/><path d="M6 13.5 H14" stroke="#cdcdcd" stroke-width="1"/><path d="M6 15.5 H14" stroke="#cdcdcd" stroke-width="1"/><path d="M6 17.5 H14" stroke="#cdcdcd" stroke-width="1"/><path d="M6 19.5 H14" stroke="#cdcdcd" stroke-width="1"/><path d="M6 21.5 H14" stroke="#cdcdcd" stroke-width="1"/><path d="M6 23.5 H14" stroke="#cdcdcd" stroke-width="1"/></svg>
<svg style="left:1877px;top:153px;" width="30" height="30" viewBox="0 0 30 30"><path d="M3 3.500 L25.500 26 M25.500 3.500 L3 26" stroke="#cdcdcd" stroke-width="4" fill="none"/></svg>
<div style="left:0px;top:191px;width:1914px;height:4px;background:#6c6c6c;"></div>
<div style="left:0px;top:195px;width:1880px;height:37px;background:#606060;"></div>
<div style="left:0px;top:232px;width:22px;height:729px;background:#404040;"></div>
<div style="left:22px;top:232px;width:1858px;height:729px;background:#000;"></div>
<div style="left:1880px;top:195px;width:34px;height:766px;background:#000;"></div>
<div style="left:1880px;top:195px;width:34px;height:34px;background:#0f0f0f;"></div>
<div style="left:1881px;top:229px;width:32px;height:332px;background:#3a3a3a;"></div>
<div style="left:1880px;top:561px;width:34px;height:366px;background:#101010;"></div>
<div style="left:1880px;top:927px;width:34px;height:34px;background:#0f0f0f;"></div>
<svg style="left:1880px;top:195px" width="34" height="34" viewBox="0 0 34 34"><path d="M8.5 21 L17 12.5 L25.5 21" stroke="#fff" stroke-width="2.2" fill="none"/></svg>
<svg style="left:1880px;top:927px" width="34" height="34" viewBox="0 0 34 34"><path d="M8.5 13 L17 21.5 L25.5 13" stroke="#fff" stroke-width="2.2" fill="none"/></svg>
<div style="left:0px;top:961px;width:1914px;height:34px;background:#000;"></div>
<div style="left:0px;top:961px;width:32px;height:34px;background:#0e0e0e;"></div>
<div style="left:32px;top:962px;width:1791px;height:32px;background:#3a3a3a;"></div>
<div style="left:1823px;top:961px;width:57px;height:34px;background:#0e0e0e;"></div>
<svg style="left:0px;top:961px" width="32" height="34" viewBox="0 0 32 34"><path d="M20 8 L11.5 16.7 L20 25.5" stroke="#fff" stroke-width="2.2" fill="none"/></svg>
<svg style="left:1846px;top:961px" width="34" height="34" viewBox="0 0 34 34"><path d="M13 8 L21.5 16.7 L13 25.5" stroke="#fff" stroke-width="2.2" fill="none"/></svg>
<div style="left:1px;top:204px;width:13px;height:13px;border:3px solid #dcdcdc;background:none"></div>
<svg style="left:1px;top:204px" width="19" height="19" viewBox="0 0 19 19"><path d="M5 9.5 L6.5 8 H12.5 L14 9.5 L12.5 11 H6.5 Z" fill="#dcdcdc"/></svg>
<div style="left:1px;top:685px;width:13px;height:13px;border:3px solid #dcdcdc;background:none"></div>
<svg style="left:1px;top:685px" width="19" height="19" viewBox="0 0 19 19"><path d="M5 9.5 L6.5 8 H12.5 L14 9.5 L12.5 11 H6.5 Z" fill="#dcdcdc"/></svg>
<div style="left:1px;top:907px;width:13px;height:13px;border:3px solid #dcdcdc;background:none"></div>
<svg style="left:1px;top:907px" width="19" height="19" viewBox="0 0 19 19"><path d="M5 9.5 L6.5 8 H12.5 L14 9.5 L12.5 11 H6.5 Z" fill="#dcdcdc"/></svg>
<svg style="left:0px;top:226px" width="22" height="451" viewBox="0 0 22 451"><path d="M4.5 0 V432 L22 449.5" stroke="#dcdcdc" stroke-width="3" fill="none"/></svg>
<svg style="left:0px;top:707px" width="22" height="192" viewBox="0 0 22 192"><path d="M4.5 0 V173 L22 190.5" stroke="#dcdcdc" stroke-width="3" fill="none"/></svg>
<svg style="left:0px;top:929px" width="22" height="32" viewBox="0 0 22 32"><path d="M4.5 0 V32" stroke="#dcdcdc" stroke-width="3" fill="none"/></svg>
<div style="left:0;top:191px;width:1880px;height:770px;overflow:hidden;background:none">
<div style="left:27px;top:4px;width:18px;height:37px;background:#5aa09c;"></div>
<span class="tx " style="left:28.85px;top:11.09px;font-size:24.5px;line-height:31.85px;font-weight:700;color:#ffffff;">&lt;</span>
<span class="tx " style="left:45.00px;top:7.59px;font-size:26.1px;line-height:33.93px;font-weight:700;color:#f08a36;transform:scaleX(1.1091);">H1</span>
<div style="left:82px;top:4px;width:18.5px;height:37px;background:#5aa09c;"></div>
<span class="tx " style="left:84.10px;top:11.09px;font-size:24.5px;line-height:31.85px;font-weight:700;color:#ffffff;">&gt;</span>
<span class="tx " style="left:100.50px;top:7.59px;font-size:26.1px;line-height:33.93px;font-weight:400;color:#ffffff;transform:scaleX(1.0267);">Welcome</span>
<span class="tx " style="left:219.05px;top:7.59px;font-size:26.1px;line-height:33.93px;font-weight:400;color:#ffffff;transform:scaleX(1.1433);">to</span>
<span class="tx " style="left:251.30px;top:7.59px;font-size:26.1px;line-height:33.93px;font-weight:400;color:#ffffff;transform:scaleX(0.9954);">Regular-Expressions.info</span>
<span class="tx " style="left:543.43px;top:11.09px;font-size:24.5px;line-height:31.85px;font-weight:700;color:#f08a36;">&lt;</span>
<span class="tx " style="left:560.90px;top:7.59px;font-size:26.1px;line-height:33.93px;font-weight:400;color:#f08a36;-webkit-text-stroke:0.5px #f08a36;transform:scaleX(1.4011);">/</span>
<span class="tx " style="left:572.28px;top:7.59px;font-size:26.1px;line-height:33.93px;font-weight:700;color:#f08a36;transform:scaleX(1.1255);">H1</span>
<span class="tx " style="left:611.76px;top:11.09px;font-size:24.5px;line-height:31.85px;font-weight:700;color:#f08a36;">&gt;</span>
<span class="tx " style="left:27.91px;top:85.09px;font-size:24.5px;line-height:31.85px;font-weight:700;color:#f08a36;">&lt;</span>
<span class="tx " style="left:44.13px;top:81.59px;font-size:26.1px;line-height:33.93px;font-weight:700;color:#f08a36;transform:scaleX(1.0187);">P</span>
<span class="tx " style="left:63.78px;top:85.09px;font-size:24.5px;line-height:31.85px;font-weight:700;color:#f08a36;">&gt;</span>
<span class="tx " style="left:80.00px;top:81.59px;font-size:26.1px;line-height:33.93px;font-weight:400;color:#ffffff;transform:scaleX(1.0081);">A</span>
<div style="left:105px;top:78px;width:215.7px;height:37px;background:#96902c;"></div>
<div style="left:105px;top:109px;width:215.7px;height:2px;background:#fff;"></div>
<div style="left:105px;top:113px;width:215.7px;height:2px;background:#fff;"></div>
<span class="tx " style="left:105.00px;top:81.59px;font-size:26.1px;line-height:33.93px;font-weight:400;color:#ffffff;transform:scaleX(1.0263);">regular</span>
<span class="tx " style="left:195.68px;top:81.59px;font-size:26.1px;line-height:33.93px;font-weight:400;color:#ffffff;transform:scaleX(0.9906);">expression</span>
<span class="tx " style="left:327.84px;top:81.59px;font-size:26.1px;line-height:33.93px;font-weight:400;color:#ffffff;transform:scaleX(0.9034);">(</span>
<div style="left:335.7px;top:78px;width:65.0px;height:37px;background:#96902c;"></div>
<div style="left:335.7px;top:109px;width:65.0px;height:2px;background:#fff;"></div>
<div style="left:335.7px;top:113px;width:65.0px;height:2px;background:#fff;"></div>
<span class="tx " style="left:335.70px;top:81.59px;font-size:26.1px;line-height:33.93px;font-weight:400;color:#ffffff;transform:scaleX(0.9957);">regex</span>
<span class="tx " style="left:407.97px;top:81.59px;font-size:26.1px;line-height:33.93px;font-weight:400;color:#ffffff;transform:scaleX(1.0672);">or</span>
<div style="left:440px;top:78px;width:80.70000000000005px;height:37px;background:#96902c;"></div>
<div style="left:440px;top:109px;width:80.70000000000005px;height:2px;background:#fff;"></div>
<div style="left:440px;top:113px;width:80.70000000000005px;height:2px;background:#fff;"></div>
<span class="tx " style="left:440.00px;top:81.59px;font-size:26.1px;line-height:33.93px;font-weight:400;color:#ffffff;transform:scaleX(1.0113);">regexp</span>
<span class="tx " style="left:527.90px;top:81.59px;font-size:26.1px;line-height:33.93px;font-weight:400;color:#ffffff;transform:scaleX(1.0761);">for</span>
<span class="tx " style="left:567.88px;top:81.59px;font-size:26.1px;line-height:33.93px;font-weight:400;color:#ffffff;transform:scaleX(1.0107);">short)</span>
<span class="tx " style="left:642.50px;top:81.59px;font-size:26.1px;line-height:33.93px;font-weight:400;color:#ffffff;transform:scaleX(0.9426);">is</span>
<span class="tx " style="left:667.59px;top:81.59px;font-size:26.1px;line-height:33.93px;font-weight:400;color:#ffffff;transform:scaleX(0.9356);">a</span>
<span class="tx " style="left:688.48px;top:81.59px;font-size:26.1px;line-height:33.93px;font-weight:400;color:#ffffff;transform:scaleX(0.9824);">special</span>
<span class="tx " style="left:775.59px;top:81.59px;font-size:26.1px;line-height:33.93px;font-weight:400;color:#ffffff;transform:scaleX(1.0532);">text</span>
<span class="tx " style="left:827.21px;top:81.59px;font-size:26.1px;line-height:33.93px;font-weight:400;color:#ffffff;transform:scaleX(1.0482);">string</span>
<span class="tx " style="left:901.40px;top:81.59px;font-size:26.1px;line-height:33.93px;font-weight:400;color:#ffffff;transform:scaleX(1.0922);">for</span>
<span class="tx " style="left:941.98px;top:81.59px;font-size:26.1px;line-height:33.93px;font-weight:400;color:#ffffff;transform:scaleX(1.0254);">describing</span>
<span class="tx " style="left:1071.26px;top:81.59px;font-size:26.1px;line-height:33.93px;font-weight:400;color:#ffffff;transform:scaleX(0.9356);">a</span>
<span class="tx " style="left:1092.16px;top:81.59px;font-size:26.1px;line-height:33.93px;font-weight:400;color:#ffffff;transform:scaleX(0.9646);">search</span>
<span class="tx " style="left:1175.02px;top:81.59px;font-size:26.1px;line-height:33.93px;font-weight:400;color:#ffffff;transform:scaleX(1.0337);">pattern.</span>
<span class="tx " style="left:1281.04px;top:81.59px;font-size:26.1px;line-height:33.93px;font-weight:400;color:#ffffff;transform:scaleX(1.0273);">You</span>
<span class="tx " style="left:1333.57px;top:81.59px;font-size:26.1px;line-height:33.93px;font-weight:400;color:#ffffff;transform:scaleX(0.9694);">can</span>
<span class="tx " style="left:1381.63px;top:81.59px;font-size:26.1px;line-height:33.93px;font-weight:400;color:#ffffff;transform:scaleX(1.0642);">think</span>
<span class="tx " style="left:1447.57px;top:81.59px;font-size:26.1px;line-height:33.93px;font-weight:400;color:#ffffff;transform:scaleX(1.0964);">of</span>
<div style="left:1478.7px;top:78px;width:227.0px;height:37px;background:#96902c;"></div>
<div style="left:1478.7px;top:109px;width:227.0px;height:2px;background:#fff;"></div>
<div style="left:1478.7px;top:113px;width:227.0px;height:2px;background:#fff;"></div>
<span class="tx " style="left:1478.70px;top:81.59px;font-size:26.1px;line-height:33.93px;font-weight:400;color:#ffffff;transform:scaleX(1.0262);">regular</span>
<span class="tx " style="left:1569.38px;top:81.59px;font-size:26.1px;line-height:33.93px;font-weight:400;color:#ffffff;transform:scaleX(0.9790);">expressions</span>
<span class="tx " style="left:1713.09px;top:81.59px;font-size:26.1px;line-height:33.93px;font-weight:400;color:#ffffff;transform:scaleX(0.9135);">as</span>
<span class="tx " style="left:1745.67px;top:81.59px;font-size:26.1px;line-height:33.93px;font-weight:400;color:#ffffff;transform:scaleX(1.0236);">wildcards</span>
<span class="tx " style="left:25.50px;top:118.59px;font-size:26.1px;line-height:33.93px;font-weight:400;color:#ffffff;transform:scaleX(1.0705);">on</span>
<span class="tx " style="left:63.97px;top:118.59px;font-size:26.1px;line-height:33.93px;font-weight:400;color:#ffffff;transform:scaleX(1.0093);">steroids.</span>
<span class="tx " style="left:178.29px;top:118.59px;font-size:26.1px;line-height:33.93px;font-weight:400;color:#ffffff;transform:scaleX(1.0441);">You</span>
<span class="tx " style="left:231.67px;top:118.59px;font-size:26.1px;line-height:33.93px;font-weight:400;color:#ffffff;transform:scaleX(0.9863);">are</span>
<span class="tx " style="left:276.26px;top:118.59px;font-size:26.1px;line-height:33.93px;font-weight:400;color:#ffffff;transform:scaleX(1.0588);">probably</span>
<span class="tx " style="left:389.65px;top:118.59px;font-size:26.1px;line-height:33.93px;font-weight:400;color:#ffffff;transform:scaleX(1.0479);">familiar</span>
<span class="tx " style="left:485.16px;top:118.59px;font-size:26.1px;line-height:33.93px;font-weight:400;color:#ffffff;transform:scaleX(1.0867);">with</span>
<span class="tx " style="left:542.98px;top:118.59px;font-size:26.1px;line-height:33.93px;font-weight:400;color:#ffffff;transform:scaleX(1.0430);">wildcard</span>
<span class="tx " style="left:650.20px;top:118.59px;font-size:26.1px;line-height:33.93px;font-weight:400;color:#ffffff;transform:scaleX(1.0396);">notations</span>
<span class="tx " style="left:767.55px;top:118.59px;font-size:26.1px;line-height:33.93px;font-weight:400;color:#ffffff;transform:scaleX(0.9695);">such</span>
<span class="tx " style="left:828.25px;top:118.59px;font-size:26.1px;line-height:33.93px;font-weight:400;color:#ffffff;transform:scaleX(0.8963);">as</span>
<span class="tx " style="left:860.21px;top:118.59px;font-size:26.1px;line-height:33.93px;font-weight:400;color:#ffffff;transform:scaleX(0.9645);">*.</span>
<svg style="left:877.5px;top:147px" width="31.5" height="6" viewBox="0 0 31.5 6"><path d="M0 4.3 L3 1 L6 4.3 L9 1 L12 4.3 L15 1 L18 4.3 L21 1 L24 4.3 L27 1 L30 4.3" stroke="#f04a30" stroke-width="1.8" fill="none"/></svg>
<span class="tx " style="left:877.00px;top:118.59px;font-size:26.1px;line-height:33.93px;font-weight:400;color:#ffffff;transform:scaleX(1.1435);">txt</span>
<span class="tx " style="left:915.84px;top:118.59px;font-size:26.1px;line-height:33.93px;font-weight:400;color:#ffffff;transform:scaleX(1.1380);">to</span>
<span class="tx " style="left:947.94px;top:118.59px;font-size:26.1px;line-height:33.93px;font-weight:400;color:#ffffff;transform:scaleX(1.0878);">find</span>
<span class="tx " style="left:1001.05px;top:118.59px;font-size:26.1px;line-height:33.93px;font-weight:400;color:#ffffff;transform:scaleX(1.0188);">all</span>
<span class="tx " style="left:1034.99px;top:118.59px;font-size:26.1px;line-height:33.93px;font-weight:400;color:#ffffff;transform:scaleX(1.0568);">text</span>
<span class="tx " style="left:1086.78px;top:118.59px;font-size:26.1px;line-height:33.93px;font-weight:400;color:#ffffff;transform:scaleX(1.0066);">files</span>
<span class="tx " style="left:1140.83px;top:118.59px;font-size:26.1px;line-height:33.93px;font-weight:400;color:#ffffff;transform:scaleX(1.0656);">in</span>
<span class="tx " style="left:1169.81px;top:118.59px;font-size:26.1px;line-height:33.93px;font-weight:400;color:#ffffff;transform:scaleX(0.9388);">a</span>
<span class="tx " style="left:1190.77px;top:118.59px;font-size:26.1px;line-height:33.93px;font-weight:400;color:#ffffff;transform:scaleX(1.0601);">file</span>
<span class="tx " style="left:1233.47px;top:118.59px;font-size:26.1px;line-height:33.93px;font-weight:400;color:#ffffff;transform:scaleX(1.0143);">manager.</span>
<span class="tx " style="left:1358.50px;top:118.59px;font-size:26.1px;line-height:33.93px;font-weight:400;color:#ffffff;transform:scaleX(0.9409);">The</span>
<div style="left:1408px;top:115px;width:65px;height:37px;background:#96902c;"></div>
<div style="left:1408px;top:146px;width:65px;height:2px;background:#fff;"></div>
<div style="left:1408px;top:150px;width:65px;height:2px;background:#fff;"></div>
<span class="tx " style="left:1408.00px;top:118.59px;font-size:26.1px;line-height:33.93px;font-weight:400;color:#ffffff;transform:scaleX(0.9957);">regex</span>
<span class="tx " style="left:1480.45px;top:118.59px;font-size:26.1px;line-height:33.93px;font-weight:400;color:#ffffff;transform:scaleX(1.0467);">equivalent</span>
<span class="tx " style="left:1612.43px;top:118.59px;font-size:26.1px;line-height:33.93px;font-weight:400;color:#ffffff;transform:scaleX(0.9608);">is</span>
<span class="tx " style="left:1639.69px;top:122.09px;font-size:24.5px;line-height:31.85px;font-weight:700;color:#f08a36;">&lt;</span>
<span class="tx " style="left:1655.68px;top:118.59px;font-size:26.1px;line-height:33.93px;font-weight:700;color:#f08a36;transform:scaleX(0.9978);">TT</span>
<span class="tx " style="left:25.50px;top:155.59px;font-size:26.1px;line-height:33.93px;font-weight:400;color:#f7b866;transform:scaleX(0.8881);">CLASS</span>
<span class="tx " style="left:103.60px;top:159.09px;font-size:24.5px;line-height:31.85px;font-weight:700;color:#f08a36;">=</span>
<div style="left:120px;top:152px;width:65px;height:37px;background:#96902c;"></div>
<div style="left:120px;top:183px;width:65px;height:2px;background:#fff;"></div>
<div style="left:120px;top:187px;width:65px;height:2px;background:#fff;"></div>
<span class="tx " style="left:120.00px;top:155.59px;font-size:26.1px;line-height:33.93px;font-weight:400;color:#ffffff;transform:scaleX(0.9957);">regex</span>
<span class="tx " style="left:187.10px;top:159.09px;font-size:24.5px;line-height:31.85px;font-weight:700;color:#f08a36;">&gt;</span>
<span class="tx " style="left:203.50px;top:155.59px;font-size:26.1px;line-height:33.93px;font-weight:400;color:#ffffff;transform:scaleX(1.0500);">.*\.</span>
<svg style="left:237.5px;top:184px" width="30.5" height="6" viewBox="0 0 30.5 6"><path d="M0 4.3 L3 1 L6 4.3 L9 1 L12 4.3 L15 1 L18 4.3 L21 1 L24 4.3 L27 1 L30 4.3" stroke="#f04a30" stroke-width="1.8" fill="none"/></svg>
<span class="tx " style="left:237.00px;top:155.59px;font-size:26.1px;line-height:33.93px;font-weight:400;color:#ffffff;transform:scaleX(1.1072);">txt</span>
<span class="tx " style="left:267.50px;top:155.59px;font-size:26.1px;line-height:33.93px;font-weight:400;color:#ffffff;transform:scaleX(0.9989);">$</span>
<span class="tx " style="left:284.02px;top:159.09px;font-size:24.5px;line-height:31.85px;font-weight:700;color:#f08a36;">&lt;</span>
<span class="tx " style="left:301.65px;top:155.59px;font-size:26.1px;line-height:33.93px;font-weight:400;color:#f08a36;-webkit-text-stroke:0.5px #f08a36;transform:scaleX(1.4011);">/</span>
<span class="tx " style="left:313.10px;top:155.59px;font-size:26.1px;line-height:33.93px;font-weight:700;color:#f08a36;transform:scaleX(1.0361);">TT</span>
<span class="tx " style="left:348.17px;top:159.09px;font-size:24.5px;line-height:31.85px;font-weight:700;color:#f08a36;">&gt;</span>
<span class="tx " style="left:364.50px;top:155.59px;font-size:26.1px;line-height:33.93px;font-weight:400;color:#ffffff;transform:scaleX(0.9655);">.</span>
<span class="tx " style="left:373.40px;top:159.09px;font-size:24.5px;line-height:31.85px;font-weight:700;color:#f08a36;">&lt;</span>
<span class="tx " style="left:390.82px;top:155.59px;font-size:26.1px;line-height:33.93px;font-weight:400;color:#f08a36;-webkit-text-stroke:0.5px #f08a36;transform:scaleX(1.4011);">/</span>
<span class="tx " style="left:402.18px;top:155.59px;font-size:26.1px;line-height:33.93px;font-weight:700;color:#f08a36;transform:scaleX(1.0172);">P</span>
<span class="tx " style="left:421.79px;top:159.09px;font-size:24.5px;line-height:31.85px;font-weight:700;color:#f08a36;">&gt;</span>
<span class="tx " style="left:27.91px;top:233.09px;font-size:24.5px;line-height:31.85px;font-weight:700;color:#f08a36;">&lt;</span>
<span class="tx " style="left:44.13px;top:229.59px;font-size:26.1px;line-height:33.93px;font-weight:700;color:#f08a36;transform:scaleX(1.0187);">P</span>
<span class="tx " style="left:63.78px;top:233.09px;font-size:24.5px;line-height:31.85px;font-weight:700;color:#f08a36;">&gt;</span>
<span class="tx " style="left:80.00px;top:229.59px;font-size:26.1px;line-height:33.93px;font-weight:400;color:#ffffff;transform:scaleX(1.0094);">But</span>
<span class="tx " style="left:126.87px;top:229.59px;font-size:26.1px;line-height:33.93px;font-weight:400;color:#ffffff;transform:scaleX(1.0381);">you</span>
<span class="tx " style="left:177.87px;top:229.59px;font-size:26.1px;line-height:33.93px;font-weight:400;color:#ffffff;transform:scaleX(0.9769);">can</span>
<span class="tx " style="left:226.31px;top:229.59px;font-size:26.1px;line-height:33.93px;font-weight:400;color:#ffffff;transform:scaleX(1.0816);">do</span>
<span class="tx " style="left:265.04px;top:229.59px;font-size:26.1px;line-height:33.93px;font-weight:400;color:#ffffff;transform:scaleX(1.0429);">more</span>
<span class="tx " style="left:334.37px;top:229.59px;font-size:26.1px;line-height:33.93px;font-weight:400;color:#ffffff;transform:scaleX(1.0775);">with</span>
<div style="left:391.7px;top:226px;width:226.59999999999997px;height:37px;background:#96902c;"></div>
<div style="left:391.7px;top:257px;width:226.59999999999997px;height:2px;background:#fff;"></div>
<div style="left:391.7px;top:261px;width:226.59999999999997px;height:2px;background:#fff;"></div>
<span class="tx " style="left:391.70px;top:229.59px;font-size:26.1px;line-height:33.93px;font-weight:400;color:#ffffff;transform:scaleX(1.0244);">regular</span>
<span class="tx " style="left:482.22px;top:229.59px;font-size:26.1px;line-height:33.93px;font-weight:400;color:#ffffff;transform:scaleX(0.9773);">expressions</span>
<span class="tx " style="left:618.30px;top:229.59px;font-size:26.1px;line-height:33.93px;font-weight:400;color:#ffffff;transform:scaleX(0.8044);">.</span>
<span class="tx " style="left:638.87px;top:229.59px;font-size:26.1px;line-height:33.93px;font-weight:400;color:#ffffff;transform:scaleX(1.0283);">In</span>
<span class="tx " style="left:668.62px;top:229.59px;font-size:26.1px;line-height:33.93px;font-weight:400;color:#ffffff;transform:scaleX(0.9429);">a</span>
<span class="tx " style="left:689.67px;top:229.59px;font-size:26.1px;line-height:33.93px;font-weight:400;color:#ffffff;transform:scaleX(1.0614);">text</span>
<span class="tx " style="left:741.69px;top:229.59px;font-size:26.1px;line-height:33.93px;font-weight:400;color:#ffffff;transform:scaleX(1.0816);">editor</span>
<span class="tx " style="left:819.66px;top:229.59px;font-size:26.1px;line-height:33.93px;font-weight:400;color:#ffffff;transform:scaleX(1.0335);">like</span>
<span class="tx " style="left:869.13px;top:233.09px;font-size:24.5px;line-height:31.85px;font-weight:700;color:#f08a36;">&lt;</span>
<span class="tx " style="left:885.06px;top:229.59px;font-size:26.1px;line-height:33.93px;font-weight:700;color:#f08a36;transform:scaleX(1.0036);">A</span>
<span class="tx " style="left:911.50px;top:229.59px;font-size:26.1px;line-height:33.93px;font-weight:400;color:#f7b866;transform:scaleX(0.8867);">HREF</span>
<span class="tx " style="left:976.10px;top:233.09px;font-size:24.5px;line-height:31.85px;font-weight:700;color:#f08a36;">=</span>
<span class="tx " style="left:992.00px;top:229.59px;font-size:26.1px;line-height:33.93px;font-weight:400;color:#4a9fe0;transform:scaleX(1.0253);">&quot;</span>
<div style="left:1002.5px;top:258px;width:193.0px;height:2px;background:#9ee6fb;"></div>
<span class="tx " style="left:1001.50px;top:229.59px;font-size:26.1px;line-height:33.93px;font-weight:400;color:#9ee6fb;transform:scaleX(1.0841);">editpadpro.html</span>
<span class="tx " style="left:1196.50px;top:229.59px;font-size:26.1px;line-height:33.93px;font-weight:400;color:#4a9fe0;transform:scaleX(1.1332);">&quot;</span>
<span class="tx " style="left:1208.85px;top:233.09px;font-size:24.5px;line-height:31.85px;font-weight:700;color:#f08a36;">&gt;</span>
<span class="tx " style="left:1225.00px;top:229.59px;font-size:26.1px;line-height:33.93px;font-weight:400;color:#ffffff;">EditPad</span>
<span class="tx " style="left:1324.01px;top:229.59px;font-size:26.1px;line-height:33.93px;font-weight:400;color:#ffffff;transform:scaleX(1.0093);">Pro</span>
<span class="tx " style="left:1366.86px;top:233.09px;font-size:24.5px;line-height:31.85px;font-weight:700;color:#f08a36;">&lt;</span>
<span class="tx " style="left:1384.21px;top:229.59px;font-size:26.1px;line-height:33.93px;font-weight:400;color:#f08a36;-webkit-text-stroke:0.5px #f08a36;transform:scaleX(1.4011);">/</span>
<span class="tx " style="left:1395.54px;top:229.59px;font-size:26.1px;line-height:33.93px;font-weight:700;color:#f08a36;transform:scaleX(1.0302);">A</span>
<span class="tx " style="left:1416.83px;top:233.09px;font-size:24.5px;line-height:31.85px;font-weight:700;color:#f08a36;">&gt;</span>
<span class="tx " style="left:1440.35px;top:229.59px;font-size:26.1px;line-height:33.93px;font-weight:400;color:#ffffff;transform:scaleX(1.0791);">or</span>
<span class="tx " style="left:1472.74px;top:229.59px;font-size:26.1px;line-height:33.93px;font-weight:400;color:#ffffff;transform:scaleX(0.9405);">a</span>
<span class="tx " style="left:1493.74px;top:229.59px;font-size:26.1px;line-height:33.93px;font-weight:400;color:#ffffff;transform:scaleX(0.9969);">specialized</span>
<span class="tx " style="left:1629.78px;top:229.59px;font-size:26.1px;line-height:33.93px;font-weight:400;color:#ffffff;transform:scaleX(1.0588);">text</span>
<span class="tx " style="left:1681.67px;top:229.59px;font-size:26.1px;line-height:33.93px;font-weight:400;color:#ffffff;transform:scaleX(1.0098);">processing</span>
<span class="tx " style="left:1816.46px;top:229.59px;font-size:26.1px;line-height:33.93px;font-weight:400;color:#ffffff;transform:scaleX(1.1178);">tool</span>
<span class="tx " style="left:25.50px;top:266.59px;font-size:26.1px;line-height:33.93px;font-weight:400;color:#ffffff;transform:scaleX(1.0802);">like</span>
<span class="tx " style="left:77.03px;top:270.09px;font-size:24.5px;line-height:31.85px;font-weight:700;color:#f08a36;">&lt;</span>
<span class="tx " style="left:92.86px;top:266.59px;font-size:26.1px;line-height:33.93px;font-weight:700;color:#f08a36;transform:scaleX(0.9922);">A</span>
<span class="tx " style="left:119.00px;top:266.59px;font-size:26.1px;line-height:33.93px;font-weight:400;color:#f7b866;transform:scaleX(0.9008);">HREF</span>
<span class="tx " style="left:184.60px;top:270.09px;font-size:24.5px;line-height:31.85px;font-weight:700;color:#f08a36;">=</span>
<span class="tx " style="left:200.50px;top:266.59px;font-size:26.1px;line-height:33.93px;font-weight:400;color:#4a9fe0;transform:scaleX(1.0253);">&quot;</span>
<div style="left:211px;top:295px;width:189px;height:2px;background:#9ee6fb;"></div>
<span class="tx " style="left:210.00px;top:266.59px;font-size:26.1px;line-height:33.93px;font-weight:400;color:#9ee6fb;transform:scaleX(1.0620);">powergrep.html</span>
<span class="tx " style="left:401.00px;top:266.59px;font-size:26.1px;line-height:33.93px;font-weight:400;color:#4a9fe0;transform:scaleX(1.1332);">&quot;</span>
<span class="tx " style="left:413.60px;top:270.09px;font-size:24.5px;line-height:31.85px;font-weight:700;color:#f08a36;">&gt;</span>
<span class="tx " style="left:430.00px;top:266.59px;font-size:26.1px;line-height:33.93px;font-weight:400;color:#ffffff;transform:scaleX(0.9464);">PowerGREP</span>
<span class="tx " style="left:571.73px;top:270.09px;font-size:24.5px;line-height:31.85px;font-weight:700;color:#f08a36;">&lt;</span>
<span class="tx " style="left:588.85px;top:266.59px;font-size:26.1px;line-height:33.93px;font-weight:400;color:#f08a36;-webkit-text-stroke:0.5px #f08a36;transform:scaleX(1.4011);">/</span>
<span class="tx " style="left:600.10px;top:266.59px;font-size:26.1px;line-height:33.93px;font-weight:700;color:#f08a36;transform:scaleX(1.0150);">A</span>
<span class="tx " style="left:620.97px;top:270.09px;font-size:24.5px;line-height:31.85px;font-weight:700;color:#f08a36;">&gt;</span>
<span class="tx " style="left:637.00px;top:266.59px;font-size:26.1px;line-height:33.93px;font-weight:400;color:#ffffff;transform:scaleX(0.8018);">,</span>
<span class="tx " style="left:650.16px;top:266.59px;font-size:26.1px;line-height:33.93px;font-weight:400;color:#ffffff;transform:scaleX(1.0405);">you</span>
<span class="tx " style="left:701.29px;top:266.59px;font-size:26.1px;line-height:33.93px;font-weight:400;color:#ffffff;transform:scaleX(1.0503);">could</span>
<span class="tx " style="left:774.16px;top:266.59px;font-size:26.1px;line-height:33.93px;font-weight:400;color:#ffffff;transform:scaleX(0.9640);">use</span>
<span class="tx " style="left:822.07px;top:266.59px;font-size:26.1px;line-height:33.93px;font-weight:400;color:#ffffff;transform:scaleX(1.0552);">the</span>
<div style="left:867.7px;top:263px;width:215.5999999999999px;height:37px;background:#96902c;"></div>
<div style="left:867.7px;top:294px;width:215.5999999999999px;height:2px;background:#fff;"></div>
<div style="left:867.7px;top:298px;width:215.5999999999999px;height:2px;background:#fff;"></div>
<span class="tx " style="left:867.70px;top:266.59px;font-size:26.1px;line-height:33.93px;font-weight:400;color:#ffffff;transform:scaleX(1.0258);">regular</span>
<span class="tx " style="left:958.34px;top:266.59px;font-size:26.1px;line-height:33.93px;font-weight:400;color:#ffffff;transform:scaleX(0.9901);">expression</span>
<span class="tx " style="left:1093.94px;top:270.09px;font-size:24.5px;line-height:31.85px;font-weight:700;color:#f08a36;">&lt;</span>
<span class="tx " style="left:1109.69px;top:266.59px;font-size:26.1px;line-height:33.93px;font-weight:700;color:#f08a36;transform:scaleX(0.9705);">TT</span>
<span class="tx " style="left:1148.00px;top:266.59px;font-size:26.1px;line-height:33.93px;font-weight:400;color:#f7b866;transform:scaleX(0.8764);">CLASS</span>
<span class="tx " style="left:1225.50px;top:270.09px;font-size:24.5px;line-height:31.85px;font-weight:700;color:#f08a36;">=</span>
<div style="left:1242.3px;top:263px;width:65.70000000000005px;height:37px;background:#96902c;"></div>
<div style="left:1242.3px;top:294px;width:65.70000000000005px;height:2px;background:#fff;"></div>
<div style="left:1242.3px;top:298px;width:65.70000000000005px;height:2px;background:#fff;"></div>
<span class="tx " style="left:1242.30px;top:266.59px;font-size:26.1px;line-height:33.93px;font-weight:400;color:#ffffff;transform:scaleX(1.0064);">regex</span>
<span class="tx " style="left:1310.10px;top:270.09px;font-size:24.5px;line-height:31.85px;font-weight:700;color:#f08a36;">&gt;</span>
<span class="tx " style="left:1326.50px;top:266.59px;font-size:26.1px;line-height:33.93px;font-weight:400;color:#ffffff;transform:scaleX(1.0615);">\b[A-Z0-9._%+-]+@[A-Z0-9.-]+\.[A-</span>
<span class="tx " style="left:25.50px;top:303.59px;font-size:26.1px;line-height:33.93px;font-weight:400;color:#ffffff;transform:scaleX(1.0390);">Z]{2,4}\b</span>
<span class="tx " style="left:129.86px;top:307.09px;font-size:24.5px;line-height:31.85px;font-weight:700;color:#f08a36;">&lt;</span>
<span class="tx " style="left:147.20px;top:303.59px;font-size:26.1px;line-height:33.93px;font-weight:400;color:#f08a36;-webkit-text-stroke:0.5px #f08a36;transform:scaleX(1.4011);">/</span>
<span class="tx " style="left:158.54px;top:303.59px;font-size:26.1px;line-height:33.93px;font-weight:700;color:#f08a36;transform:scaleX(1.0172);">TT</span>
<span class="tx " style="left:192.83px;top:307.09px;font-size:24.5px;line-height:31.85px;font-weight:700;color:#f08a36;">&gt;</span>
<span class="tx " style="left:216.34px;top:303.59px;font-size:26.1px;line-height:33.93px;font-weight:400;color:#ffffff;transform:scaleX(1.1378);">to</span>
<span class="tx " style="left:248.44px;top:303.59px;font-size:26.1px;line-height:33.93px;font-weight:400;color:#ffffff;transform:scaleX(0.9677);">search</span>
<span class="tx " style="left:331.57px;top:303.59px;font-size:26.1px;line-height:33.93px;font-weight:400;color:#ffffff;transform:scaleX(1.0958);">for</span>
<span class="tx " style="left:372.28px;top:303.59px;font-size:26.1px;line-height:33.93px;font-weight:400;color:#ffffff;transform:scaleX(0.9913);">an</span>
<span class="tx " style="left:408.39px;top:303.59px;font-size:26.1px;line-height:33.93px;font-weight:400;color:#ffffff;transform:scaleX(1.0212);">email</span>
<span class="tx " style="left:479.41px;top:303.59px;font-size:26.1px;line-height:33.93px;font-weight:400;color:#ffffff;transform:scaleX(0.9683);">address.</span>
<span class="tx " style="left:593.17px;top:307.09px;font-size:24.5px;line-height:31.85px;font-weight:700;color:#f08a36;">&lt;</span>
<span class="tx " style="left:609.64px;top:303.59px;font-size:26.1px;line-height:33.93px;font-weight:700;color:#f08a36;transform:scaleX(1.2713);">I</span>
<span class="tx " style="left:621.03px;top:307.09px;font-size:24.5px;line-height:31.85px;font-weight:700;color:#f08a36;">&gt;</span>
<span class="tx " style="left:637.50px;top:303.59px;font-size:26.1px;line-height:33.93px;font-weight:400;color:#ffffff;transform:scaleX(1.0118);">Any</span>
<span class="tx " style="left:684.94px;top:307.09px;font-size:24.5px;line-height:31.85px;font-weight:700;color:#f08a36;">&lt;</span>
<span class="tx " style="left:702.42px;top:303.59px;font-size:26.1px;line-height:33.93px;font-weight:400;color:#f08a36;-webkit-text-stroke:0.5px #f08a36;transform:scaleX(1.4011);">/</span>
<span class="tx " style="left:713.82px;top:303.59px;font-size:26.1px;line-height:33.93px;font-weight:700;color:#f08a36;transform:scaleX(1.2404);">I</span>
<span class="tx " style="left:724.75px;top:307.09px;font-size:24.5px;line-height:31.85px;font-weight:700;color:#f08a36;">&gt;</span>
<span class="tx " style="left:748.33px;top:303.59px;font-size:26.1px;line-height:33.93px;font-weight:400;color:#ffffff;transform:scaleX(1.0203);">email</span>
<span class="tx " style="left:819.28px;top:303.59px;font-size:26.1px;line-height:33.93px;font-weight:400;color:#ffffff;transform:scaleX(0.9674);">address,</span>
<span class="tx " style="left:923.45px;top:303.59px;font-size:26.1px;line-height:33.93px;font-weight:400;color:#ffffff;transform:scaleX(1.1369);">to</span>
<span class="tx " style="left:955.52px;top:303.59px;font-size:26.1px;line-height:33.93px;font-weight:400;color:#ffffff;transform:scaleX(1.0238);">be</span>
<span class="tx " style="left:992.57px;top:303.59px;font-size:26.1px;line-height:33.93px;font-weight:400;color:#ffffff;transform:scaleX(0.9639);">exact.</span>
<span class="tx " style="left:1074.35px;top:303.59px;font-size:26.1px;line-height:33.93px;font-weight:400;color:#ffffff;transform:scaleX(0.9915);">A</span>
<span class="tx " style="left:1098.93px;top:303.59px;font-size:26.1px;line-height:33.93px;font-weight:400;color:#ffffff;transform:scaleX(0.9933);">very</span>
<span class="tx " style="left:1155.23px;top:303.59px;font-size:26.1px;line-height:33.93px;font-weight:400;color:#ffffff;transform:scaleX(1.0179);">similar</span>
<div style="left:1239.3px;top:300px;width:216.4000000000001px;height:37px;background:#96902c;"></div>
<div style="left:1239.3px;top:331px;width:216.4000000000001px;height:2px;background:#fff;"></div>
<div style="left:1239.3px;top:335px;width:216.4000000000001px;height:2px;background:#fff;"></div>
<span class="tx " style="left:1239.30px;top:303.59px;font-size:26.1px;line-height:33.93px;font-weight:400;color:#ffffff;transform:scaleX(1.0296);">regular</span>
<span class="tx " style="left:1330.28px;top:303.59px;font-size:26.1px;line-height:33.93px;font-weight:400;color:#ffffff;transform:scaleX(0.9938);">expression</span>
<span class="tx " style="left:1463.04px;top:303.59px;font-size:26.1px;line-height:33.93px;font-weight:400;color:#ffffff;transform:scaleX(0.9930);">(replace</span>
<span class="tx " style="left:1563.99px;top:303.59px;font-size:26.1px;line-height:33.93px;font-weight:400;color:#ffffff;transform:scaleX(1.0539);">the</span>
<span class="tx " style="left:1609.57px;top:303.59px;font-size:26.1px;line-height:33.93px;font-weight:400;color:#ffffff;transform:scaleX(1.0606);">first</span>
<span class="tx " style="left:1663.23px;top:307.09px;font-size:24.5px;line-height:31.85px;font-weight:700;color:#f08a36;">&lt;</span>
<span class="tx " style="left:1679.26px;top:303.59px;font-size:26.1px;line-height:33.93px;font-weight:700;color:#f08a36;transform:scaleX(1.0026);">TT</span>
<span class="tx " style="left:1712.96px;top:307.09px;font-size:24.5px;line-height:31.85px;font-weight:700;color:#f08a36;">&gt;</span>
<span class="tx " style="left:1729.00px;top:303.59px;font-size:26.1px;line-height:33.93px;font-weight:400;color:#ffffff;transform:scaleX(1.2405);">\b</span>
<span class="tx " style="left:1757.86px;top:307.09px;font-size:24.5px;line-height:31.85px;font-weight:700;color:#f08a36;">&lt;</span>
<span class="tx " style="left:1775.20px;top:303.59px;font-size:26.1px;line-height:33.93px;font-weight:400;color:#f08a36;-webkit-text-stroke:0.5px #f08a36;transform:scaleX(1.4011);">/</span>
<span class="tx " style="left:1786.54px;top:303.59px;font-size:26.1px;line-height:33.93px;font-weight:700;color:#f08a36;transform:scaleX(1.0172);">TT</span>
<span class="tx " style="left:1820.83px;top:307.09px;font-size:24.5px;line-height:31.85px;font-weight:700;color:#f08a36;">&gt;</span>
<span class="tx " style="left:1844.67px;top:303.59px;font-size:26.1px;line-height:33.93px;font-weight:400;color:#ffffff;transform:scaleX(1.1277);">with</span>
<span class="tx " style="left:28.92px;top:344.09px;font-size:24.5px;line-height:31.85px;font-weight:700;color:#f08a36;">&lt;</span>
<span class="tx " style="left:45.16px;top:340.59px;font-size:26.1px;line-height:33.93px;font-weight:700;color:#f08a36;transform:scaleX(1.0249);">TT</span>
<span class="tx " style="left:79.77px;top:344.09px;font-size:24.5px;line-height:31.85px;font-weight:700;color:#f08a36;">&gt;</span>
<span class="tx " style="left:96.00px;top:340.59px;font-size:26.1px;line-height:33.93px;font-weight:400;color:#ffffff;transform:scaleX(1.5102);">^</span>
<span class="tx " style="left:116.41px;top:344.09px;font-size:24.5px;line-height:31.85px;font-weight:700;color:#f08a36;">&lt;</span>
<span class="tx " style="left:133.85px;top:340.59px;font-size:26.1px;line-height:33.93px;font-weight:400;color:#f08a36;-webkit-text-stroke:0.5px #f08a36;transform:scaleX(1.4011);">/</span>
<span class="tx " style="left:145.23px;top:340.59px;font-size:26.1px;line-height:33.93px;font-weight:700;color:#f08a36;transform:scaleX(1.0235);">TT</span>
<span class="tx " style="left:179.78px;top:344.09px;font-size:24.5px;line-height:31.85px;font-weight:700;color:#f08a36;">&gt;</span>
<span class="tx " style="left:203.39px;top:340.59px;font-size:26.1px;line-height:33.93px;font-weight:400;color:#ffffff;transform:scaleX(1.0294);">and</span>
<span class="tx " style="left:255.60px;top:340.59px;font-size:26.1px;line-height:33.93px;font-weight:400;color:#ffffff;transform:scaleX(1.0610);">the</span>
<span class="tx " style="left:301.48px;top:340.59px;font-size:26.1px;line-height:33.93px;font-weight:400;color:#ffffff;transform:scaleX(1.0050);">last</span>
<span class="tx " style="left:349.68px;top:340.59px;font-size:26.1px;line-height:33.93px;font-weight:400;color:#ffffff;transform:scaleX(1.0370);">one</span>
<span class="tx " style="left:402.22px;top:340.59px;font-size:26.1px;line-height:33.93px;font-weight:400;color:#ffffff;transform:scaleX(1.0860);">with</span>
<span class="tx " style="left:461.79px;top:344.09px;font-size:24.5px;line-height:31.85px;font-weight:700;color:#f08a36;">&lt;</span>
<span class="tx " style="left:477.89px;top:340.59px;font-size:26.1px;line-height:33.93px;font-weight:700;color:#f08a36;transform:scaleX(1.0100);">TT</span>
<span class="tx " style="left:511.90px;top:344.09px;font-size:24.5px;line-height:31.85px;font-weight:700;color:#f08a36;">&gt;</span>
<span class="tx " style="left:528.00px;top:340.59px;font-size:26.1px;line-height:33.93px;font-weight:400;color:#ffffff;transform:scaleX(1.1367);">$</span>
<span class="tx " style="left:546.36px;top:344.09px;font-size:24.5px;line-height:31.85px;font-weight:700;color:#f08a36;">&lt;</span>
<span class="tx " style="left:563.70px;top:340.59px;font-size:26.1px;line-height:33.93px;font-weight:400;color:#f08a36;-webkit-text-stroke:0.5px #f08a36;transform:scaleX(1.4011);">/</span>
<span class="tx " style="left:575.04px;top:340.59px;font-size:26.1px;line-height:33.93px;font-weight:700;color:#f08a36;transform:scaleX(1.0172);">TT</span>
<span class="tx " style="left:609.33px;top:344.09px;font-size:24.5px;line-height:31.85px;font-weight:700;color:#f08a36;">&gt;</span>
<span class="tx " style="left:625.50px;top:340.59px;font-size:26.1px;line-height:33.93px;font-weight:400;color:#ffffff;transform:scaleX(0.9249);">)</span>
<span class="tx " style="left:640.86px;top:340.59px;font-size:26.1px;line-height:33.93px;font-weight:400;color:#ffffff;transform:scaleX(0.9741);">can</span>
<span class="tx " style="left:689.15px;top:340.59px;font-size:26.1px;line-height:33.93px;font-weight:400;color:#ffffff;transform:scaleX(1.0207);">be</span>
<span class="tx " style="left:726.09px;top:340.59px;font-size:26.1px;line-height:33.93px;font-weight:400;color:#ffffff;transform:scaleX(0.9901);">used</span>
<span class="tx " style="left:789.44px;top:340.59px;font-size:26.1px;line-height:33.93px;font-weight:400;color:#ffffff;transform:scaleX(1.0345);">by</span>
<span class="tx " style="left:825.25px;top:340.59px;font-size:26.1px;line-height:33.93px;font-weight:400;color:#ffffff;transform:scaleX(0.9350);">a</span>
<span class="tx " style="left:846.13px;top:340.59px;font-size:26.1px;line-height:33.93px;font-weight:400;color:#ffffff;transform:scaleX(1.0434);">programmer</span>
<span class="tx " style="left:1001.72px;top:340.59px;font-size:26.1px;line-height:33.93px;font-weight:400;color:#ffffff;transform:scaleX(1.1334);">to</span>
<span class="tx " style="left:1033.70px;top:340.59px;font-size:26.1px;line-height:33.93px;font-weight:400;color:#ffffff;transform:scaleX(0.9821);">check</span>
<span class="tx " style="left:1107.95px;top:340.59px;font-size:26.1px;line-height:33.93px;font-weight:400;color:#ffffff;transform:scaleX(1.1351);">if</span>
<span class="tx " style="left:1130.07px;top:340.59px;font-size:26.1px;line-height:33.93px;font-weight:400;color:#ffffff;transform:scaleX(1.0497);">the</span>
<span class="tx " style="left:1175.46px;top:340.59px;font-size:26.1px;line-height:33.93px;font-weight:400;color:#ffffff;transform:scaleX(0.9773);">user</span>
<span class="tx " style="left:1232.38px;top:340.59px;font-size:26.1px;line-height:33.93px;font-weight:400;color:#ffffff;transform:scaleX(1.0274);">entered</span>
<span class="tx " style="left:1330.62px;top:340.59px;font-size:26.1px;line-height:33.93px;font-weight:400;color:#ffffff;transform:scaleX(0.9350);">a</span>
<span class="tx " style="left:1352.97px;top:344.09px;font-size:24.5px;line-height:31.85px;font-weight:700;color:#f08a36;">&lt;</span>
<span class="tx " style="left:1368.76px;top:340.59px;font-size:26.1px;line-height:33.93px;font-weight:700;color:#f08a36;transform:scaleX(1.0238);">a</span>
<span class="tx " style="left:1391.00px;top:340.59px;font-size:26.1px;line-height:33.93px;font-weight:400;color:#f7b866;transform:scaleX(1.0785);">href</span>
<span class="tx " style="left:1441.10px;top:344.09px;font-size:24.5px;line-height:31.85px;font-weight:700;color:#f08a36;">=</span>
<span class="tx " style="left:1457.00px;top:340.59px;font-size:26.1px;line-height:33.93px;font-weight:400;color:#4a9fe0;transform:scaleX(1.0253);">&quot;</span>
<div style="left:1467.5px;top:369px;width:125.0px;height:2px;background:#9ee6fb;"></div>
<span class="tx " style="left:1466.50px;top:340.59px;font-size:26.1px;line-height:33.93px;font-weight:400;color:#9ee6fb;transform:scaleX(1.0681);">email.html</span>
<span class="tx " style="left:1593.50px;top:340.59px;font-size:26.1px;line-height:33.93px;font-weight:400;color:#4a9fe0;transform:scaleX(1.1332);">&quot;</span>
<span class="tx " style="left:1606.10px;top:344.09px;font-size:24.5px;line-height:31.85px;font-weight:700;color:#f08a36;">&gt;</span>
<span class="tx " style="left:1622.50px;top:340.59px;font-size:26.1px;line-height:33.93px;font-weight:400;color:#ffffff;transform:scaleX(1.0565);">properly</span>
<span class="tx " style="left:1729.48px;top:340.59px;font-size:26.1px;line-height:33.93px;font-weight:400;color:#ffffff;transform:scaleX(1.0752);">formatted</span>
<span class="tx " style="left:25.50px;top:377.59px;font-size:26.1px;line-height:33.93px;font-weight:400;color:#ffffff;transform:scaleX(1.0361);">email</span>
<span class="tx " style="left:97.55px;top:377.59px;font-size:26.1px;line-height:33.93px;font-weight:400;color:#ffffff;transform:scaleX(0.9957);">address</span>
<span class="tx " style="left:191.85px;top:381.09px;font-size:24.5px;line-height:31.85px;font-weight:700;color:#f08a36;">&lt;</span>
<span class="tx " style="left:209.17px;top:377.59px;font-size:26.1px;line-height:33.93px;font-weight:400;color:#f08a36;-webkit-text-stroke:0.5px #f08a36;transform:scaleX(1.4011);">/</span>
<span class="tx " style="left:220.50px;top:377.59px;font-size:26.1px;line-height:33.93px;font-weight:700;color:#f08a36;transform:scaleX(1.0678);">a</span>
<span class="tx " style="left:237.85px;top:381.09px;font-size:24.5px;line-height:31.85px;font-weight:700;color:#f08a36;">&gt;</span>
<span class="tx " style="left:254.00px;top:377.59px;font-size:26.1px;line-height:33.93px;font-weight:400;color:#ffffff;transform:scaleX(0.8012);">.</span>
<span class="tx " style="left:274.49px;top:377.59px;font-size:26.1px;line-height:33.93px;font-weight:400;color:#ffffff;transform:scaleX(1.0242);">In</span>
<span class="tx " style="left:304.12px;top:377.59px;font-size:26.1px;line-height:33.93px;font-weight:400;color:#ffffff;transform:scaleX(1.0363);">just</span>
<span class="tx " style="left:353.54px;top:377.59px;font-size:26.1px;line-height:33.93px;font-weight:400;color:#ffffff;transform:scaleX(1.0304);">one</span>
<span class="tx " style="left:405.75px;top:377.59px;font-size:26.1px;line-height:33.93px;font-weight:400;color:#ffffff;transform:scaleX(1.0375);">line</span>
<span class="tx " style="left:455.24px;top:377.59px;font-size:26.1px;line-height:33.93px;font-weight:400;color:#ffffff;transform:scaleX(1.1065);">of</span>
<span class="tx " style="left:486.66px;top:377.59px;font-size:26.1px;line-height:33.93px;font-weight:400;color:#ffffff;transform:scaleX(0.9969);">code,</span>
<span class="tx " style="left:557.64px;top:377.59px;font-size:26.1px;line-height:33.93px;font-weight:400;color:#ffffff;transform:scaleX(1.0348);">whether</span>
<span class="tx " style="left:661.06px;top:377.59px;font-size:26.1px;line-height:33.93px;font-weight:400;color:#ffffff;transform:scaleX(1.0786);">that</span>
<span class="tx " style="left:715.35px;top:377.59px;font-size:26.1px;line-height:33.93px;font-weight:400;color:#ffffff;transform:scaleX(1.0219);">code</span>
<span class="tx " style="left:780.52px;top:377.59px;font-size:26.1px;line-height:33.93px;font-weight:400;color:#ffffff;transform:scaleX(0.9461);">is</span>
<span class="tx " style="left:805.70px;top:377.59px;font-size:26.1px;line-height:33.93px;font-weight:400;color:#ffffff;transform:scaleX(1.0730);">written</span>
<span class="tx " style="left:895.51px;top:377.59px;font-size:26.1px;line-height:33.93px;font-weight:400;color:#ffffff;transform:scaleX(1.0659);">in</span>
<span class="tx " style="left:926.03px;top:381.09px;font-size:24.5px;line-height:31.85px;font-weight:700;color:#f08a36;">&lt;</span>
<span class="tx " style="left:941.86px;top:377.59px;font-size:26.1px;line-height:33.93px;font-weight:700;color:#f08a36;transform:scaleX(0.9922);">A</span>
<span class="tx " style="left:968.00px;top:377.59px;font-size:26.1px;line-height:33.93px;font-weight:400;color:#f7b866;transform:scaleX(0.8938);">HREF</span>
<span class="tx " style="left:1033.10px;top:381.09px;font-size:24.5px;line-height:31.85px;font-weight:700;color:#f08a36;">=</span>
<span class="tx " style="left:1049.00px;top:377.59px;font-size:26.1px;line-height:33.93px;font-weight:400;color:#4a9fe0;transform:scaleX(1.0253);">&quot;</span>
<div style="left:1059.5px;top:406px;width:106.0px;height:2px;background:#9ee6fb;"></div>
<span class="tx " style="left:1058.50px;top:377.59px;font-size:26.1px;line-height:33.93px;font-weight:400;color:#9ee6fb;transform:scaleX(1.0793);">perl.html</span>
<span class="tx " style="left:1166.50px;top:377.59px;font-size:26.1px;line-height:33.93px;font-weight:400;color:#4a9fe0;transform:scaleX(1.1332);">&quot;</span>
<span class="tx " style="left:1178.85px;top:381.09px;font-size:24.5px;line-height:31.85px;font-weight:700;color:#f08a36;">&gt;</span>
<span class="tx " style="left:1195.00px;top:377.59px;font-size:26.1px;line-height:33.93px;font-weight:400;color:#ffffff;transform:scaleX(1.0128);">Perl</span>
<span class="tx " style="left:1243.86px;top:381.09px;font-size:24.5px;line-height:31.85px;font-weight:700;color:#f08a36;">&lt;</span>
<span class="tx " style="left:1261.21px;top:377.59px;font-size:26.1px;line-height:33.93px;font-weight:400;color:#f08a36;-webkit-text-stroke:0.5px #f08a36;transform:scaleX(1.4011);">/</span>
<span class="tx " style="left:1272.54px;top:377.59px;font-size:26.1px;line-height:33.93px;font-weight:700;color:#f08a36;transform:scaleX(1.0302);">A</span>
<span class="tx " style="left:1293.83px;top:381.09px;font-size:24.5px;line-height:31.85px;font-weight:700;color:#f08a36;">&gt;</span>
<span class="tx " style="left:1310.00px;top:377.59px;font-size:26.1px;line-height:33.93px;font-weight:400;color:#ffffff;transform:scaleX(0.9750);">,</span>
<span class="tx " style="left:1327.53px;top:381.09px;font-size:24.5px;line-height:31.85px;font-weight:700;color:#f08a36;">&lt;</span>
<span class="tx " style="left:1343.36px;top:377.59px;font-size:26.1px;line-height:33.93px;font-weight:700;color:#f08a36;transform:scaleX(0.9922);">A</span>
<span class="tx " style="left:1369.50px;top:377.59px;font-size:26.1px;line-height:33.93px;font-weight:400;color:#f7b866;transform:scaleX(0.8867);">HREF</span>
<span class="tx " style="left:1434.35px;top:381.09px;font-size:24.5px;line-height:31.85px;font-weight:700;color:#f08a36;">=</span>
<span class="tx " style="left:1450.50px;top:377.59px;font-size:26.1px;line-height:33.93px;font-weight:400;color:#4a9fe0;transform:scaleX(1.0253);">&quot;</span>
<div style="left:1461px;top:406px;width:106px;height:2px;background:#9ee6fb;"></div>
<span class="tx " style="left:1460.00px;top:377.59px;font-size:26.1px;line-height:33.93px;font-weight:400;color:#9ee6fb;transform:scaleX(1.0790);">php.html</span>
<span class="tx " style="left:1568.00px;top:377.59px;font-size:26.1px;line-height:33.93px;font-weight:400;color:#4a9fe0;transform:scaleX(1.1332);">&quot;</span>
<span class="tx " style="left:1580.60px;top:381.09px;font-size:24.5px;line-height:31.85px;font-weight:700;color:#f08a36;">&gt;</span>
<span class="tx " style="left:1597.00px;top:377.59px;font-size:26.1px;line-height:33.93px;font-weight:400;color:#ffffff;transform:scaleX(0.9412);">PHP</span>
<span class="tx " style="left:1649.29px;top:381.09px;font-size:24.5px;line-height:31.85px;font-weight:700;color:#f08a36;">&lt;</span>
<span class="tx " style="left:1666.53px;top:377.59px;font-size:26.1px;line-height:33.93px;font-weight:400;color:#f08a36;-webkit-text-stroke:0.5px #f08a36;transform:scaleX(1.4011);">/</span>
<span class="tx " style="left:1677.82px;top:377.59px;font-size:26.1px;line-height:33.93px;font-weight:700;color:#f08a36;transform:scaleX(1.0226);">A</span>
<span class="tx " style="left:1698.90px;top:381.09px;font-size:24.5px;line-height:31.85px;font-weight:700;color:#f08a36;">&gt;</span>
<span class="tx " style="left:1715.00px;top:377.59px;font-size:26.1px;line-height:33.93px;font-weight:400;color:#ffffff;transform:scaleX(1.0055);">,</span>
<span class="tx " style="left:1733.37px;top:381.09px;font-size:24.5px;line-height:31.85px;font-weight:700;color:#f08a36;">&lt;</span>
<span class="tx " style="left:1749.55px;top:377.59px;font-size:26.1px;line-height:33.93px;font-weight:700;color:#f08a36;transform:scaleX(1.0314);">A</span>
<span class="tx " style="left:25.50px;top:414.59px;font-size:26.1px;line-height:33.93px;font-weight:400;color:#f7b866;transform:scaleX(0.9149);">HREF</span>
<span class="tx " style="left:92.10px;top:418.09px;font-size:24.5px;line-height:31.85px;font-weight:700;color:#f08a36;">=</span>
<span class="tx " style="left:108.00px;top:414.59px;font-size:26.1px;line-height:33.93px;font-weight:400;color:#4a9fe0;transform:scaleX(1.0253);">&quot;</span>
<div style="left:118.5px;top:443px;width:107.0px;height:2px;background:#9ee6fb;"></div>
<span class="tx " style="left:117.50px;top:414.59px;font-size:26.1px;line-height:33.93px;font-weight:400;color:#9ee6fb;transform:scaleX(1.0438);">java.html</span>
<span class="tx " style="left:226.50px;top:414.59px;font-size:26.1px;line-height:33.93px;font-weight:400;color:#4a9fe0;transform:scaleX(1.1332);">&quot;</span>
<span class="tx " style="left:238.85px;top:418.09px;font-size:24.5px;line-height:31.85px;font-weight:700;color:#f08a36;">&gt;</span>
<span class="tx " style="left:255.00px;top:414.59px;font-size:26.1px;line-height:33.93px;font-weight:400;color:#ffffff;transform:scaleX(0.9524);">Java</span>
<span class="tx " style="left:309.29px;top:418.09px;font-size:24.5px;line-height:31.85px;font-weight:700;color:#f08a36;">&lt;</span>
<span class="tx " style="left:326.53px;top:414.59px;font-size:26.1px;line-height:33.93px;font-weight:400;color:#f08a36;-webkit-text-stroke:0.5px #f08a36;transform:scaleX(1.4011);">/</span>
<span class="tx " style="left:337.82px;top:414.59px;font-size:26.1px;line-height:33.93px;font-weight:700;color:#f08a36;transform:scaleX(1.0226);">A</span>
<span class="tx " style="left:358.90px;top:418.09px;font-size:24.5px;line-height:31.85px;font-weight:700;color:#f08a36;">&gt;</span>
<span class="tx " style="left:375.00px;top:414.59px;font-size:26.1px;line-height:33.93px;font-weight:400;color:#ffffff;transform:scaleX(1.0359);">,</span>
<span class="tx " style="left:393.43px;top:418.09px;font-size:24.5px;line-height:31.85px;font-weight:700;color:#f08a36;">&lt;</span>
<span class="tx " style="left:409.16px;top:414.59px;font-size:26.1px;line-height:33.93px;font-weight:700;color:#f08a36;transform:scaleX(0.9808);">A</span>
<span class="tx " style="left:435.00px;top:414.59px;font-size:26.1px;line-height:33.93px;font-weight:400;color:#f7b866;transform:scaleX(0.9008);">HREF</span>
<span class="tx " style="left:500.60px;top:418.09px;font-size:24.5px;line-height:31.85px;font-weight:700;color:#f08a36;">=</span>
<span class="tx " style="left:516.50px;top:414.59px;font-size:26.1px;line-height:33.93px;font-weight:400;color:#4a9fe0;transform:scaleX(1.0253);">&quot;</span>
<div style="left:527px;top:443px;width:138.5px;height:2px;background:#9ee6fb;"></div>
<span class="tx " style="left:526.00px;top:414.59px;font-size:26.1px;line-height:33.93px;font-weight:400;color:#9ee6fb;transform:scaleX(1.0884);">dotnet.html</span>
<span class="tx " style="left:666.50px;top:414.59px;font-size:26.1px;line-height:33.93px;font-weight:400;color:#4a9fe0;transform:scaleX(1.1332);">&quot;</span>
<span class="tx " style="left:678.85px;top:418.09px;font-size:24.5px;line-height:31.85px;font-weight:700;color:#f08a36;">&gt;</span>
<span class="tx " style="left:695.00px;top:414.59px;font-size:26.1px;line-height:33.93px;font-weight:400;color:#ffffff;transform:scaleX(0.9571);">a</span>
<span class="tx " style="left:716.37px;top:414.59px;font-size:26.1px;line-height:33.93px;font-weight:400;color:#ffffff;transform:scaleX(0.9163);">.NET</span>
<span class="tx " style="left:778.31px;top:414.59px;font-size:26.1px;line-height:33.93px;font-weight:400;color:#ffffff;transform:scaleX(1.0400);">language</span>
<span class="tx " style="left:891.86px;top:418.09px;font-size:24.5px;line-height:31.85px;font-weight:700;color:#f08a36;">&lt;</span>
<span class="tx " style="left:909.21px;top:414.59px;font-size:26.1px;line-height:33.93px;font-weight:400;color:#f08a36;-webkit-text-stroke:0.5px #f08a36;transform:scaleX(1.4011);">/</span>
<span class="tx " style="left:920.54px;top:414.59px;font-size:26.1px;line-height:33.93px;font-weight:700;color:#f08a36;transform:scaleX(1.0302);">A</span>
<span class="tx " style="left:941.83px;top:418.09px;font-size:24.5px;line-height:31.85px;font-weight:700;color:#f08a36;">&gt;</span>
<span class="tx " style="left:965.36px;top:414.59px;font-size:26.1px;line-height:33.93px;font-weight:400;color:#ffffff;transform:scaleX(1.0812);">or</span>
<span class="tx " style="left:997.82px;top:414.59px;font-size:26.1px;line-height:33.93px;font-weight:400;color:#ffffff;transform:scaleX(0.9424);">a</span>
<span class="tx " style="left:1018.86px;top:414.59px;font-size:26.1px;line-height:33.93px;font-weight:400;color:#ffffff;transform:scaleX(1.0833);">multitude</span>
<span class="tx " style="left:1140.94px;top:414.59px;font-size:26.1px;line-height:33.93px;font-weight:400;color:#ffffff;transform:scaleX(1.1104);">of</span>
<span class="tx " style="left:1172.47px;top:414.59px;font-size:26.1px;line-height:33.93px;font-weight:400;color:#ffffff;transform:scaleX(1.0670);">other</span>
<span class="tx " style="left:1243.31px;top:414.59px;font-size:26.1px;line-height:33.93px;font-weight:400;color:#ffffff;transform:scaleX(0.9961);">languages.</span>
<span class="tx " style="left:1372.40px;top:418.09px;font-size:24.5px;line-height:31.85px;font-weight:700;color:#f08a36;">&lt;</span>
<span class="tx " style="left:1389.82px;top:414.59px;font-size:26.1px;line-height:33.93px;font-weight:400;color:#f08a36;-webkit-text-stroke:0.5px #f08a36;transform:scaleX(1.4011);">/</span>
<span class="tx " style="left:1401.18px;top:414.59px;font-size:26.1px;line-height:33.93px;font-weight:700;color:#f08a36;transform:scaleX(1.0172);">P</span>
<span class="tx " style="left:1420.79px;top:418.09px;font-size:24.5px;line-height:31.85px;font-weight:700;color:#f08a36;">&gt;</span>
<span class="tx " style="left:28.94px;top:492.09px;font-size:24.5px;line-height:31.85px;font-weight:700;color:#f08a36;">&lt;</span>
<span class="tx " style="left:45.20px;top:488.59px;font-size:26.1px;line-height:33.93px;font-weight:700;color:#f08a36;transform:scaleX(1.1273);">H2</span>
<span class="tx " style="left:84.75px;top:492.09px;font-size:24.5px;line-height:31.85px;font-weight:700;color:#f08a36;">&gt;</span>
<div style="left:101px;top:485px;width:222.3px;height:37px;background:#96902c;"></div>
<div style="left:101px;top:516px;width:222.3px;height:2px;background:#fff;"></div>
<div style="left:101px;top:520px;width:222.3px;height:2px;background:#fff;"></div>
<span class="tx " style="left:101.00px;top:488.59px;font-size:26.1px;line-height:33.93px;font-weight:400;color:#ffffff;transform:scaleX(0.9871);">Regular</span>
<span class="tx " style="left:198.54px;top:488.59px;font-size:26.1px;line-height:33.93px;font-weight:400;color:#ffffff;transform:scaleX(0.9664);">Expression</span>
<span class="tx " style="left:330.65px;top:488.59px;font-size:26.1px;line-height:33.93px;font-weight:400;color:#ffffff;transform:scaleX(1.0138);">Quick</span>
<span class="tx " style="left:405.62px;top:488.59px;font-size:26.1px;line-height:33.93px;font-weight:400;color:#ffffff;transform:scaleX(1.0049);">Start</span>
<span class="tx " style="left:462.88px;top:492.09px;font-size:24.5px;line-height:31.85px;font-weight:700;color:#f08a36;">&lt;</span>
<span class="tx " style="left:480.26px;top:488.59px;font-size:26.1px;line-height:33.93px;font-weight:400;color:#f08a36;-webkit-text-stroke:0.5px #f08a36;transform:scaleX(1.4011);">/</span>
<span class="tx " style="left:491.61px;top:488.59px;font-size:26.1px;line-height:33.93px;font-weight:700;color:#f08a36;transform:scaleX(1.1190);">H2</span>
<span class="tx " style="left:530.81px;top:492.09px;font-size:24.5px;line-height:31.85px;font-weight:700;color:#f08a36;">&gt;</span>
<span class="tx " style="left:27.91px;top:566.09px;font-size:24.5px;line-height:31.85px;font-weight:700;color:#f08a36;">&lt;</span>
<span class="tx " style="left:44.13px;top:562.59px;font-size:26.1px;line-height:33.93px;font-weight:700;color:#f08a36;transform:scaleX(1.0187);">P</span>
<span class="tx " style="left:63.78px;top:566.09px;font-size:24.5px;line-height:31.85px;font-weight:700;color:#f08a36;">&gt;</span>
<span class="tx " style="left:80.00px;top:562.59px;font-size:26.1px;line-height:33.93px;font-weight:400;color:#ffffff;transform:scaleX(1.0680);">If</span>
<span class="tx " style="left:102.81px;top:562.59px;font-size:26.1px;line-height:33.93px;font-weight:400;color:#ffffff;transform:scaleX(1.0377);">you</span>
<span class="tx " style="left:153.80px;top:562.59px;font-size:26.1px;line-height:33.93px;font-weight:400;color:#ffffff;transform:scaleX(1.0344);">just</span>
<span class="tx " style="left:203.13px;top:562.59px;font-size:26.1px;line-height:33.93px;font-weight:400;color:#ffffff;transform:scaleX(1.0360);">want</span>
<span class="tx " style="left:267.57px;top:562.59px;font-size:26.1px;line-height:33.93px;font-weight:400;color:#ffffff;transform:scaleX(1.1362);">to</span>
<span class="tx " style="left:299.62px;top:562.59px;font-size:26.1px;line-height:33.93px;font-weight:400;color:#ffffff;transform:scaleX(1.0685);">get</span>
<span class="tx " style="left:345.71px;top:562.59px;font-size:26.1px;line-height:33.93px;font-weight:400;color:#ffffff;transform:scaleX(1.0430);">your</span>
<span class="tx " style="left:405.98px;top:562.59px;font-size:26.1px;line-height:33.93px;font-weight:400;color:#ffffff;transform:scaleX(1.0429);">feet</span>
<span class="tx " style="left:458.71px;top:562.59px;font-size:26.1px;line-height:33.93px;font-weight:400;color:#ffffff;transform:scaleX(1.0430);">wet</span>
<span class="tx " style="left:508.39px;top:562.59px;font-size:26.1px;line-height:33.93px;font-weight:400;color:#ffffff;transform:scaleX(1.0771);">with</span>
<div style="left:565.7px;top:559px;width:227.0px;height:37px;background:#96902c;"></div>
<div style="left:565.7px;top:590px;width:227.0px;height:2px;background:#fff;"></div>
<div style="left:565.7px;top:594px;width:227.0px;height:2px;background:#fff;"></div>
<span class="tx " style="left:565.70px;top:562.59px;font-size:26.1px;line-height:33.93px;font-weight:400;color:#ffffff;transform:scaleX(1.0262);">regular</span>
<span class="tx " style="left:656.38px;top:562.59px;font-size:26.1px;line-height:33.93px;font-weight:400;color:#ffffff;transform:scaleX(0.9790);">expressions</span>
<span class="tx " style="left:792.70px;top:562.59px;font-size:26.1px;line-height:33.93px;font-weight:400;color:#ffffff;transform:scaleX(0.8051);">,</span>
<span class="tx " style="left:805.91px;top:562.59px;font-size:26.1px;line-height:33.93px;font-weight:400;color:#ffffff;transform:scaleX(1.0194);">take</span>
<span class="tx " style="left:863.58px;top:562.59px;font-size:26.1px;line-height:33.93px;font-weight:400;color:#ffffff;transform:scaleX(0.9438);">a</span>
<span class="tx " style="left:884.65px;top:562.59px;font-size:26.1px;line-height:33.93px;font-weight:400;color:#ffffff;transform:scaleX(1.0748);">look</span>
<span class="tx " style="left:943.48px;top:562.59px;font-size:26.1px;line-height:33.93px;font-weight:400;color:#ffffff;transform:scaleX(1.0486);">at</span>
<span class="tx " style="left:973.68px;top:562.59px;font-size:26.1px;line-height:33.93px;font-weight:400;color:#ffffff;transform:scaleX(1.0596);">the</span>
<span class="tx " style="left:1020.97px;top:566.09px;font-size:24.5px;line-height:31.85px;font-weight:700;color:#f08a36;">&lt;</span>
<span class="tx " style="left:1036.76px;top:562.59px;font-size:26.1px;line-height:33.93px;font-weight:700;color:#f08a36;transform:scaleX(1.0238);">a</span>
<span class="tx " style="left:1059.00px;top:562.59px;font-size:26.1px;line-height:33.93px;font-weight:400;color:#f7b866;transform:scaleX(1.0563);">href</span>
<span class="tx " style="left:1108.35px;top:566.09px;font-size:24.5px;line-height:31.85px;font-weight:700;color:#f08a36;">=</span>
<span class="tx " style="left:1124.50px;top:562.59px;font-size:26.1px;line-height:33.93px;font-weight:400;color:#4a9fe0;transform:scaleX(1.0793);">&quot;</span>
<div style="left:1135.5px;top:591px;width:174.5px;height:2px;background:#9ee6fb;"></div>
<span class="tx " style="left:1134.50px;top:562.59px;font-size:26.1px;line-height:33.93px;font-weight:400;color:#9ee6fb;transform:scaleX(1.0492);">quickstart.html</span>
<span class="tx " style="left:1311.00px;top:562.59px;font-size:26.1px;line-height:33.93px;font-weight:400;color:#4a9fe0;transform:scaleX(1.1872);">&quot;</span>
<span class="tx " style="left:1324.10px;top:566.09px;font-size:24.5px;line-height:31.85px;font-weight:700;color:#f08a36;">&gt;</span>
<span class="tx " style="left:1340.50px;top:562.59px;font-size:26.1px;line-height:33.93px;font-weight:400;color:#ffffff;transform:scaleX(1.0500);">one-page</span>
<div style="left:1463.7px;top:559px;width:216.0px;height:37px;background:#96902c;"></div>
<div style="left:1463.7px;top:590px;width:216.0px;height:2px;background:#fff;"></div>
<div style="left:1463.7px;top:594px;width:216.0px;height:2px;background:#fff;"></div>
<span class="tx " style="left:1463.70px;top:562.59px;font-size:26.1px;line-height:33.93px;font-weight:400;color:#ffffff;transform:scaleX(1.0277);">regular</span>
<span class="tx " style="left:1554.51px;top:562.59px;font-size:26.1px;line-height:33.93px;font-weight:400;color:#ffffff;transform:scaleX(0.9920);">expression</span>
<span class="tx " style="left:1687.13px;top:562.59px;font-size:26.1px;line-height:33.93px;font-weight:400;color:#ffffff;transform:scaleX(1.0484);">quick</span>
<span class="tx " style="left:25.50px;top:599.59px;font-size:26.1px;line-height:33.93px;font-weight:400;color:#ffffff;transform:scaleX(1.0542);">start</span>
<span class="tx " style="left:80.85px;top:603.09px;font-size:24.5px;line-height:31.85px;font-weight:700;color:#f08a36;">&lt;</span>
<span class="tx " style="left:98.17px;top:599.59px;font-size:26.1px;line-height:33.93px;font-weight:400;color:#f08a36;-webkit-text-stroke:0.5px #f08a36;transform:scaleX(1.4011);">/</span>
<span class="tx " style="left:109.50px;top:599.59px;font-size:26.1px;line-height:33.93px;font-weight:700;color:#f08a36;transform:scaleX(1.0678);">a</span>
<span class="tx " style="left:126.85px;top:603.09px;font-size:24.5px;line-height:31.85px;font-weight:700;color:#f08a36;">&gt;</span>
<span class="tx " style="left:143.00px;top:599.59px;font-size:26.1px;line-height:33.93px;font-weight:400;color:#ffffff;transform:scaleX(0.7986);">.</span>
<span class="tx " style="left:163.42px;top:599.59px;font-size:26.1px;line-height:33.93px;font-weight:400;color:#ffffff;transform:scaleX(1.0262);">While</span>
<span class="tx " style="left:237.69px;top:599.59px;font-size:26.1px;line-height:33.93px;font-weight:400;color:#ffffff;transform:scaleX(1.0363);">you</span>
<span class="tx " style="left:288.61px;top:599.59px;font-size:26.1px;line-height:33.93px;font-weight:400;color:#ffffff;transform:scaleX(1.0352);">can&#x27;t</span>
<span class="tx " style="left:352.15px;top:599.59px;font-size:26.1px;line-height:33.93px;font-weight:400;color:#ffffff;transform:scaleX(1.0064);">learn</span>
<span class="tx " style="left:417.87px;top:599.59px;font-size:26.1px;line-height:33.93px;font-weight:400;color:#ffffff;transform:scaleX(1.1347);">to</span>
<span class="tx " style="left:449.88px;top:599.59px;font-size:26.1px;line-height:33.93px;font-weight:400;color:#ffffff;transform:scaleX(1.0469);">efficiently</span>
<span class="tx " style="left:570.59px;top:599.59px;font-size:26.1px;line-height:33.93px;font-weight:400;color:#ffffff;transform:scaleX(0.9600);">use</span>
<div style="left:618.3px;top:596px;width:227.4000000000001px;height:37px;background:#96902c;"></div>
<div style="left:618.3px;top:627px;width:227.4000000000001px;height:2px;background:#fff;"></div>
<div style="left:618.3px;top:631px;width:227.4000000000001px;height:2px;background:#fff;"></div>
<span class="tx " style="left:618.30px;top:599.59px;font-size:26.1px;line-height:33.93px;font-weight:400;color:#ffffff;transform:scaleX(1.0280);">regular</span>
<span class="tx " style="left:709.14px;top:599.59px;font-size:26.1px;line-height:33.93px;font-weight:400;color:#ffffff;transform:scaleX(0.9807);">expressions</span>
<span class="tx " style="left:853.03px;top:599.59px;font-size:26.1px;line-height:33.93px;font-weight:400;color:#ffffff;transform:scaleX(1.0811);">from</span>
<span class="tx " style="left:916.78px;top:599.59px;font-size:26.1px;line-height:33.93px;font-weight:400;color:#ffffff;transform:scaleX(1.0353);">this</span>
<span class="tx " style="left:966.16px;top:599.59px;font-size:26.1px;line-height:33.93px;font-weight:400;color:#ffffff;transform:scaleX(1.0614);">brief</span>
<span class="tx " style="left:1027.37px;top:599.59px;font-size:26.1px;line-height:33.93px;font-weight:400;color:#ffffff;transform:scaleX(1.0133);">overview,</span>
<span class="tx " style="left:1144.93px;top:599.59px;font-size:26.1px;line-height:33.93px;font-weight:400;color:#ffffff;transform:scaleX(1.0635);">it&#x27;s</span>
<span class="tx " style="left:1185.31px;top:599.59px;font-size:26.1px;line-height:33.93px;font-weight:400;color:#ffffff;transform:scaleX(1.0434);">enough</span>
<span class="tx " style="left:1283.50px;top:599.59px;font-size:26.1px;line-height:33.93px;font-weight:400;color:#ffffff;transform:scaleX(1.1364);">to</span>
<span class="tx " style="left:1315.56px;top:599.59px;font-size:26.1px;line-height:33.93px;font-weight:400;color:#ffffff;transform:scaleX(1.0234);">be</span>
<span class="tx " style="left:1352.60px;top:599.59px;font-size:26.1px;line-height:33.93px;font-weight:400;color:#ffffff;transform:scaleX(1.0092);">able</span>
<span class="tx " style="left:1409.72px;top:599.59px;font-size:26.1px;line-height:33.93px;font-weight:400;color:#ffffff;transform:scaleX(1.1364);">to</span>
<span class="tx " style="left:1441.78px;top:599.59px;font-size:26.1px;line-height:33.93px;font-weight:400;color:#ffffff;transform:scaleX(1.0730);">throw</span>
<span class="tx " style="left:1517.58px;top:599.59px;font-size:26.1px;line-height:33.93px;font-weight:400;color:#ffffff;transform:scaleX(1.0644);">together</span>
<span class="tx " style="left:1626.83px;top:599.59px;font-size:26.1px;line-height:33.93px;font-weight:400;color:#ffffff;transform:scaleX(0.9375);">a</span>
<span class="tx " style="left:1647.76px;top:599.59px;font-size:26.1px;line-height:33.93px;font-weight:400;color:#ffffff;transform:scaleX(1.0334);">bunch</span>
<span class="tx " style="left:1728.58px;top:599.59px;font-size:26.1px;line-height:33.93px;font-weight:400;color:#ffffff;transform:scaleX(1.1046);">of</span>
<span class="tx " style="left:1759.95px;top:599.59px;font-size:26.1px;line-height:33.93px;font-weight:400;color:#ffffff;transform:scaleX(1.0218);">simple</span>
<div style="left:26px;top:633px;width:226.7px;height:37px;background:#96902c;"></div>
<div style="left:26px;top:664px;width:226.7px;height:2px;background:#fff;"></div>
<div style="left:26px;top:668px;width:226.7px;height:2px;background:#fff;"></div>
<span class="tx " style="left:26.00px;top:636.59px;font-size:26.1px;line-height:33.93px;font-weight:400;color:#ffffff;transform:scaleX(1.0249);">regular</span>
<span class="tx " style="left:116.56px;top:636.59px;font-size:26.1px;line-height:33.93px;font-weight:400;color:#ffffff;transform:scaleX(0.9777);">expressions</span>
<span class="tx " style="left:252.70px;top:636.59px;font-size:26.1px;line-height:33.93px;font-weight:400;color:#ffffff;transform:scaleX(0.8012);">.</span>
<span class="tx " style="left:273.19px;top:636.59px;font-size:26.1px;line-height:33.93px;font-weight:400;color:#ffffff;transform:scaleX(0.9200);">Each</span>
<span class="tx " style="left:335.25px;top:636.59px;font-size:26.1px;line-height:33.93px;font-weight:400;color:#ffffff;transform:scaleX(1.0180);">section</span>
<span class="tx " style="left:426.77px;top:636.59px;font-size:26.1px;line-height:33.93px;font-weight:400;color:#ffffff;transform:scaleX(1.0660);">in</span>
<span class="tx " style="left:455.76px;top:636.59px;font-size:26.1px;line-height:33.93px;font-weight:400;color:#ffffff;transform:scaleX(1.0544);">the</span>
<span class="tx " style="left:501.35px;top:636.59px;font-size:26.1px;line-height:33.93px;font-weight:400;color:#ffffff;transform:scaleX(1.0357);">quick</span>
<span class="tx " style="left:571.79px;top:636.59px;font-size:26.1px;line-height:33.93px;font-weight:400;color:#ffffff;transform:scaleX(1.0335);">start</span>
<span class="tx " style="left:631.58px;top:636.59px;font-size:26.1px;line-height:33.93px;font-weight:400;color:#ffffff;transform:scaleX(1.0117);">links</span>
<span class="tx " style="left:691.74px;top:636.59px;font-size:26.1px;line-height:33.93px;font-weight:400;color:#ffffff;transform:scaleX(1.0451);">directly</span>
<span class="tx " style="left:785.46px;top:636.59px;font-size:26.1px;line-height:33.93px;font-weight:400;color:#ffffff;transform:scaleX(1.1384);">to</span>
<span class="tx " style="left:817.58px;top:636.59px;font-size:26.1px;line-height:33.93px;font-weight:400;color:#ffffff;transform:scaleX(1.0417);">detailed</span>
<span class="tx " style="left:920.14px;top:636.59px;font-size:26.1px;line-height:33.93px;font-weight:400;color:#ffffff;transform:scaleX(1.0705);">information</span>
<span class="tx " style="left:1065.67px;top:636.59px;font-size:26.1px;line-height:33.93px;font-weight:400;color:#ffffff;transform:scaleX(1.0660);">in</span>
<span class="tx " style="left:1094.66px;top:636.59px;font-size:26.1px;line-height:33.93px;font-weight:400;color:#ffffff;transform:scaleX(1.0544);">the</span>
<span class="tx " style="left:1140.26px;top:636.59px;font-size:26.1px;line-height:33.93px;font-weight:400;color:#ffffff;transform:scaleX(1.0604);">tutorial.</span>
<span class="tx " style="left:1232.97px;top:640.09px;font-size:24.5px;line-height:31.85px;font-weight:700;color:#f08a36;">&lt;</span>
<span class="tx " style="left:1250.50px;top:636.59px;font-size:26.1px;line-height:33.93px;font-weight:400;color:#f08a36;-webkit-text-stroke:0.5px #f08a36;transform:scaleX(1.4011);">/</span>
<span class="tx " style="left:1261.92px;top:636.59px;font-size:26.1px;line-height:33.93px;font-weight:700;color:#f08a36;transform:scaleX(1.0249);">P</span>
<span class="tx " style="left:1281.72px;top:640.09px;font-size:24.5px;line-height:31.85px;font-weight:700;color:#f08a36;">&gt;</span>
<span class="tx " style="left:28.94px;top:714.09px;font-size:24.5px;line-height:31.85px;font-weight:700;color:#f08a36;">&lt;</span>
<span class="tx " style="left:45.20px;top:710.59px;font-size:26.1px;line-height:33.93px;font-weight:700;color:#f08a36;transform:scaleX(1.1273);">H2</span>
<span class="tx " style="left:84.75px;top:714.09px;font-size:24.5px;line-height:31.85px;font-weight:700;color:#f08a36;">&gt;</span>
<span class="tx " style="left:101.00px;top:710.59px;font-size:26.1px;line-height:33.93px;font-weight:400;color:#ffffff;transform:scaleX(1.0351);">Complete</span>
<div style="left:224px;top:707px;width:222.7px;height:37px;background:#96902c;"></div>
<div style="left:224px;top:738px;width:222.7px;height:2px;background:#fff;"></div>
<div style="left:224px;top:742px;width:222.7px;height:2px;background:#fff;"></div>
<span class="tx " style="left:224.00px;top:710.59px;font-size:26.1px;line-height:33.93px;font-weight:400;color:#ffffff;transform:scaleX(0.9889);">Regular</span>
<span class="tx " style="left:321.72px;top:710.59px;font-size:26.1px;line-height:33.93px;font-weight:400;color:#ffffff;transform:scaleX(0.9682);">Expression</span>
<span class="tx " style="left:454.16px;top:710.59px;font-size:26.1px;line-height:33.93px;font-weight:400;color:#ffffff;transform:scaleX(1.0615);">Tutorial</span>
<span class="tx " style="left:547.43px;top:714.09px;font-size:24.5px;line-height:31.85px;font-weight:700;color:#f08a36;">&lt;</span>
<span class="tx " style="left:564.90px;top:710.59px;font-size:26.1px;line-height:33.93px;font-weight:400;color:#f08a36;-webkit-text-stroke:0.5px #f08a36;transform:scaleX(1.4011);">/</span>
<span class="tx " style="left:576.28px;top:710.59px;font-size:26.1px;line-height:33.93px;font-weight:700;color:#f08a36;transform:scaleX(1.1255);">H2</span>
<span class="tx " style="left:615.76px;top:714.09px;font-size:24.5px;line-height:31.85px;font-weight:700;color:#f08a36;">&gt;</span>
<div style="left:25px;top:4px;width:2px;height:37px;background:#fff;"></div>
</div>
<div style="left:4px;top:999px;width:1905px;height:1px;background:#171717;"></div>
<div style="left:4px;top:1027px;width:1905px;height:1px;background:#171717;"></div>
<div style="left:2px;top:1000px;width:1px;height:28px;background:#171717;"></div>
<div style="left:1908px;top:1000px;width:1px;height:28px;background:#171717;"></div>
<span class="tx " style="left:5.94px;top:1000.08px;font-size:23.5px;line-height:30.55px;font-weight:400;color:#fff;transform:scaleX(0.9573);">Search</span>
<svg style="left:1856px;top:1002px" width="22" height="22" viewBox="0 0 22 22"><path d="M6 3 H15 V11 H6 Z" fill="none" stroke="#fff" stroke-width="2"/><path d="M13 3 V11" stroke="#fff" stroke-width="3"/><path d="M2 11.5 H18.5" stroke="#fff" stroke-width="2"/><path d="M10.5 12 V20.5" stroke="#fff" stroke-width="2"/></svg>
<svg style="left:1887px;top:1006px" width="16" height="16" viewBox="0 0 16 16"><path d="M2 2 L13 13 M13 2 L2 13" stroke="#fff" stroke-width="2" fill="none"/></svg>
<div style="left:4px;top:1080px;width:1905px;height:2px;background:#555;"></div>
<div style="left:4px;top:1034px;width:43px;height:42px;background:#646c74;box-sizing:border-box;border:1.5px solid #2e6fc4;"></div>
<svg style="left:8px;top:1037px;" width="37" height="37" viewBox="0 0 37 37"><circle cx="13.6" cy="14" r="11.25" fill="none" stroke="#3f6fe0" stroke-width="3.9"/><path d="M22 22.4 L34.3 34.8" stroke="#3f6fe0" stroke-width="4.0" stroke-linecap="butt"/></svg>
<div style="left:51px;top:1034px;width:2px;height:42px;background:#555;"></div>
<svg style="left:60px;top:1037px;" width="37" height="37" viewBox="0 0 37 37"><circle cx="13.6" cy="14" r="11.25" fill="none" stroke="#3f6fe0" stroke-width="3.9"/><path d="M22 22.4 L34.3 34.8" stroke="#3f6fe0" stroke-width="4.0" stroke-linecap="butt"/><text x="13.4" y="19.8" text-anchor="middle" font-family="Liberation Sans, sans-serif" font-size="16" font-weight="700" fill="#e8e8e8">1</text></svg>
<svg style="left:102.5px;top:1051px;" width="14" height="8" viewBox="0 0 14 8"><path d="M0 0 H14 L7 7.5 Z" fill="#fff"/></svg>
<svg style="left:123px;top:1037px;" width="37" height="37" viewBox="0 0 37 37"><circle cx="13.6" cy="14" r="11.25" fill="none" stroke="#3f6fe0" stroke-width="3.9"/><path d="M22 22.4 L34.3 34.8" stroke="#3f6fe0" stroke-width="4.0" stroke-linecap="butt"/><path d="M13.6 8.0 V19.0" stroke="#e8e8e8" stroke-width="3"/><path d="M8.6 14.5 L13.6 20.5 L18.6 14.5" stroke="#e8e8e8" stroke-width="3" fill="none"/></svg>
<svg style="left:165.5px;top:1051px;" width="14" height="8" viewBox="0 0 14 8"><path d="M0 0 H14 L7 7.5 Z" fill="#fff"/></svg>
<svg style="left:186px;top:1037px;" width="37" height="37" viewBox="0 0 37 37"><circle cx="13.6" cy="14" r="11.25" fill="none" stroke="#3f6fe0" stroke-width="3.9"/><path d="M22 22.4 L34.3 34.8" stroke="#3f6fe0" stroke-width="4.0" stroke-linecap="butt"/><path d="M13.6 20.0 V9.0" stroke="#e8e8e8" stroke-width="3"/><path d="M8.6 13.5 L13.6 7.5 L18.6 13.5" stroke="#e8e8e8" stroke-width="3" fill="none"/></svg>
<svg style="left:228.5px;top:1051px;" width="14" height="8" viewBox="0 0 14 8"><path d="M0 0 H14 L7 7.5 Z" fill="#fff"/></svg>
<div style="left:250px;top:1034px;width:2px;height:42px;background:#555;"></div>
<svg style="left:259px;top:1037px;" width="37" height="37" viewBox="0 0 37 37"><circle cx="13.6" cy="14" r="11.25" fill="none" stroke="#d04a28" stroke-width="3.9"/><path d="M22 22.4 L34.3 34.8" stroke="#d04a28" stroke-width="4.0" stroke-linecap="butt"/><text x="0" y="36" font-family="Liberation Sans, sans-serif" font-size="14.500" font-weight="400" fill="#505050" textLength="26" lengthAdjust="spacingAndGlyphs">S→R</text></svg>
<svg style="left:302px;top:1037px;" width="37" height="37" viewBox="0 0 37 37"><circle cx="13.6" cy="14" r="11.25" fill="none" stroke="#d04a28" stroke-width="3.9"/><path d="M22 22.4 L34.3 34.8" stroke="#d04a28" stroke-width="4.0" stroke-linecap="butt"/><text x="0" y="36" font-family="Liberation Sans, sans-serif" font-size="14.500" font-weight="400" fill="#505050" textLength="26" lengthAdjust="spacingAndGlyphs">S→R</text><path d="M13.6 8.0 V19.0" stroke="#e8e8e8" stroke-width="3"/><path d="M8.6 14.5 L13.6 20.5 L18.6 14.5" stroke="#e8e8e8" stroke-width="3" fill="none"/></svg>
<svg style="left:345px;top:1037px;" width="37" height="37" viewBox="0 0 37 37"><circle cx="13.6" cy="14" r="11.25" fill="none" stroke="#d04a28" stroke-width="3.9"/><path d="M22 22.4 L34.3 34.8" stroke="#d04a28" stroke-width="4.0" stroke-linecap="butt"/><text x="0" y="36" font-family="Liberation Sans, sans-serif" font-size="14.500" font-weight="400" fill="#505050" textLength="26" lengthAdjust="spacingAndGlyphs">S→R</text><path d="M13.6 20.0 V9.0" stroke="#e8e8e8" stroke-width="3"/><path d="M8.6 13.5 L13.6 7.5 L18.6 13.5" stroke="#e8e8e8" stroke-width="3" fill="none"/></svg>
<svg style="left:388px;top:1037px;" width="37" height="37" viewBox="0 0 37 37"><circle cx="13.6" cy="14" r="11.25" fill="none" stroke="#d04a28" stroke-width="3.9"/><path d="M22 22.4 L34.3 34.8" stroke="#d04a28" stroke-width="4.0" stroke-linecap="butt"/><text x="0" y="36" font-family="Liberation Sans, sans-serif" font-size="14.500" font-weight="400" fill="#505050" textLength="26" lengthAdjust="spacingAndGlyphs">S→R</text><text x="13.6" y="19.6" text-anchor="middle" font-family="Liberation Sans, sans-serif" font-size="15.5" font-weight="700" fill="#e8e8e8">A</text></svg>
<svg style="left:430px;top:1051px;" width="14" height="8" viewBox="0 0 14 8"><path d="M0 0 H14 L7 7.5 Z" fill="#fff"/></svg>
<div style="left:452px;top:1034px;width:2px;height:42px;background:#555;"></div>
<div style="left:457.5px;top:1034px;width:43px;height:42px;background:#646c74;box-sizing:border-box;border:1.5px solid #2e6fc4;"></div>
<svg style="left:461.5px;top:1037px;" width="37" height="37" viewBox="0 0 37 37"><circle cx="13.6" cy="14" r="11.25" fill="#b4ac3c" stroke="#3f6fe0" stroke-width="3.9"/><path d="M22 22.4 L34.3 34.8" stroke="#3f6fe0" stroke-width="4.0" stroke-linecap="butt"/></svg>
<svg style="left:504px;top:1037px;" width="37" height="37" viewBox="0 0 37 37"><circle cx="13.6" cy="14" r="11.25" fill="none" stroke="#3f6fe0" stroke-width="3.9"/><path d="M22 22.4 L34.3 34.8" stroke="#3f6fe0" stroke-width="4.0" stroke-linecap="butt"/><path d="M8.6 9 L10.2 12.4 L13.6 14 L10.2 15.6 L8.6 19 L7.0 15.6 L3.5999999999999996 14 L7.0 12.4 Z" fill="#e8e8e8"/><path d="M18.6 9 L20.200000000000003 12.4 L23.6 14 L20.200000000000003 15.6 L18.6 19 L17.0 15.6 L13.600000000000001 14 L17.0 12.4 Z" fill="#e8e8e8"/></svg>
<svg style="left:547px;top:1037px;" width="37" height="37" viewBox="0 0 37 37"><circle cx="13.6" cy="14" r="11.25" fill="none" stroke="#3f6fe0" stroke-width="3.9"/><path d="M22 22.4 L34.3 34.8" stroke="#3f6fe0" stroke-width="4.0" stroke-linecap="butt"/><text x="13.6" y="19.6" text-anchor="middle" font-family="Liberation Sans, sans-serif" font-size="15.5" font-weight="700" fill="#e8e8e8">A</text></svg>
<svg style="left:590px;top:1037px;" width="37" height="37" viewBox="0 0 37 37"><circle cx="13.6" cy="14" r="11.25" fill="none" stroke="#3f6fe0" stroke-width="3.9"/><path d="M22 22.4 L34.3 34.8" stroke="#3f6fe0" stroke-width="4.0" stroke-linecap="butt"/><path d="M6 9 L8 5.500 H19 L21.200 9 V17 H6 Z" fill="#86c04a"/><rect x="7.500" y="12" width="12.500" height="10" fill="#e8e8e8"/><rect x="10" y="5" width="7" height="4" fill="#3a5a20"/></svg>
<svg style="left:632.5px;top:1051px;" width="14" height="8" viewBox="0 0 14 8"><path d="M0 0 H14 L7 7.5 Z" fill="#fff"/></svg>
<svg style="left:653px;top:1037px;" width="37" height="37" viewBox="0 0 37 37"><circle cx="13.6" cy="14" r="11.25" fill="none" stroke="#3f6fe0" stroke-width="3.9"/><path d="M22 22.4 L34.3 34.8" stroke="#3f6fe0" stroke-width="4.0" stroke-linecap="butt"/><rect x="8" y="8.500" width="11.500" height="11.500" fill="none" stroke="#e8e8e8" stroke-width="2"/><path d="M10.500 14.200 H17 M13.700 11 V17.500" stroke="#e8e8e8" stroke-width="2"/></svg>
<svg style="left:696px;top:1037px;" width="37" height="37" viewBox="0 0 37 37"><circle cx="13.6" cy="14" r="11.25" fill="none" stroke="#3f6fe0" stroke-width="3.9"/><path d="M22 22.4 L34.3 34.8" stroke="#3f6fe0" stroke-width="4.0" stroke-linecap="butt"/><text x="-0.500" y="36.500" font-family="Liberation Mono, monospace" font-size="16" font-weight="400" fill="#f4f4f4" textLength="27" lengthAdjust="spacingAndGlyphs">123</text></svg>
<svg style="left:739px;top:1037px;" width="37" height="37" viewBox="0 0 37 37"><circle cx="13.6" cy="14" r="11.25" fill="none" stroke="#d04a28" stroke-width="3.9"/><path d="M22 22.4 L34.3 34.8" stroke="#d04a28" stroke-width="4.0" stroke-linecap="butt"/><path d="M8.500 9 L15.500 27 M19 9 L12 27" stroke="#8a8a8a" stroke-width="2.600"/><ellipse cx="8.500" cy="32" rx="4" ry="3.200" fill="none" stroke="#3f6fe0" stroke-width="2.400"/><ellipse cx="19" cy="32" rx="4" ry="3.200" fill="none" stroke="#3f6fe0" stroke-width="2.400"/></svg>
<svg style="left:781px;top:1036px;" width="38" height="38" viewBox="0 0 38 38"><path d="M1.5 1.5 H16.5 L22.5 7.5 V27.5 H1.5 Z" fill="#f0f0f0" stroke="#8a8a8a" stroke-width="1"/><path d="M16.5 1.5 V7.5 H22.5 Z" fill="#f6f6f6" stroke="#8a8a8a" stroke-width="1"/><path d="M4 5 H15" stroke="#444" stroke-width="1.2"/><path d="M4 8.0 H19" stroke="#444" stroke-width="1.2"/><path d="M4 10.8 H19" stroke="#444" stroke-width="1.2"/><path d="M4 13.6 H19" stroke="#444" stroke-width="1.2"/><path d="M4 16.4 H19" stroke="#444" stroke-width="1.2"/><path d="M4 19.2 H19" stroke="#444" stroke-width="1.2"/><path d="M4 22.0 H19" stroke="#444" stroke-width="1.2"/><path d="M4 24.799999999999997 H19" stroke="#444" stroke-width="1.2"/><path d="M13.5 9.5 H29.5 L35.5 15.5 V36.5 H13.5 Z" fill="#f0f0f0" stroke="#8a8a8a" stroke-width="1"/><path d="M29.5 9.5 V15.5 H35.5 Z" fill="#f6f6f6" stroke="#8a8a8a" stroke-width="1"/><circle cx="22.500" cy="22" r="5" fill="none" stroke="#3f78e8" stroke-width="2.600"/><path d="M26 25.500 L33 32.500" stroke="#3f78e8" stroke-width="2.800"/></svg>
<div style="left:826px;top:1034px;width:2px;height:42px;background:#555;"></div>
<div style="left:832px;top:1034px;width:72px;height:42px;background:#646c74;box-sizing:border-box;border:1.5px solid #2e6fc4;"></div>
<div style="left:1686px;top:1034px;width:2px;height:42px;background:#555;"></div>
<svg style="left:1695px;top:1037px;" width="37" height="37" viewBox="0 0 37 37"><circle cx="18" cy="18" r="17.300" fill="#000" stroke="#ccc" stroke-width="1.200"/><circle cx="32.50" cy="18.00" r="1" fill="#ddd"/><circle cx="30.56" cy="25.25" r="1" fill="#ddd"/><circle cx="25.25" cy="30.56" r="1" fill="#ddd"/><circle cx="18.00" cy="32.50" r="1" fill="#ddd"/><circle cx="10.75" cy="30.56" r="1" fill="#ddd"/><circle cx="5.44" cy="25.25" r="1" fill="#ddd"/><circle cx="3.50" cy="18.00" r="1" fill="#ddd"/><circle cx="5.44" cy="10.75" r="1" fill="#ddd"/><circle cx="10.75" cy="5.44" r="1" fill="#ddd"/><circle cx="18.00" cy="3.50" r="1" fill="#ddd"/><circle cx="25.25" cy="5.44" r="1" fill="#ddd"/><circle cx="30.56" cy="10.75" r="1" fill="#ddd"/><path d="M11 12.500 L18 18 L29 11.500" stroke="#ddd" stroke-width="1.600" fill="none"/><path d="M12 16 Q9 27 20 28" stroke="#3f6fe0" stroke-width="4.600" fill="none"/><path d="M17 22 L24 28.500 L16.500 33.500 Z" fill="#3f6fe0"/></svg>
<svg style="left:1737.5px;top:1051px;" width="14" height="8" viewBox="0 0 14 8"><path d="M0 0 H14 L7 7.5 Z" fill="#fff"/></svg>
<svg style="left:1757px;top:1038px;" width="38" height="34" viewBox="0 0 38 34"><path d="M1.500 32.500 V5.500 L5 1.500 H13 L17.500 5.500 H35.500 V32.500 Z" fill="#c8dc78" stroke="#98b048"/><path d="M1.500 9.500 H13.500 L17.500 5.500" stroke="#98b048" fill="none"/><circle cx="12.500" cy="15" r="2.600" fill="#788838"/><circle cx="24.500" cy="15" r="2.600" fill="#788838"/><path d="M8 22 Q18.500 32 29 22" stroke="#788838" stroke-width="3" fill="none" stroke-linecap="round"/></svg>
<svg style="left:1801px;top:1051px;" width="14" height="8" viewBox="0 0 14 8"><path d="M0 0 H14 L7 7.5 Z" fill="#fff"/></svg>
<svg style="left:7px;top:1088px;" width="36" height="38" viewBox="0 0 36 38"><path d="M3 2 L11 8 H25 L33 2 L30 14 Q33 22 29 27 L34 37 H2 L7 27 Q3 22 6 14 Z" fill="#b89058" stroke="#5a4020" stroke-width="1"/><ellipse cx="18" cy="15" rx="12.500" ry="9" fill="#ecd8b0"/><circle cx="11.500" cy="13.500" r="2.800" fill="#e89020"/><circle cx="24.500" cy="13.500" r="2.800" fill="#e89020"/><circle cx="11.500" cy="13.500" r="1.200" fill="#000"/><circle cx="24.500" cy="13.500" r="1.200" fill="#000"/><path d="M18 15 L16 21 L18 24 L20 21 Z" fill="#705030"/><path d="M9 26 H27 V37 H9 Z" fill="#d8b888"/><path d="M12 28 L10 35 M24 28 L26 35" stroke="#5a4020" stroke-width="1.500"/><text x="15" y="34" font-family="Liberation Sans, sans-serif" font-size="9" fill="#3a2810">*</text></svg>
<svg style="left:52px;top:1090px;" width="32" height="32" viewBox="0 0 32 32"><circle cx="15.500" cy="15.500" r="14.500" fill="#5aa83a" stroke="#30200c" stroke-width="1.600"/><path d="M3 30 Q4 16 14 8 Q22 2 30 4 Q31 12 24 18 Q15 25 6 24 Z" fill="#f4ecd8" stroke="#b07840" stroke-width="1"/><path d="M5 27 Q14 16 28 6" stroke="#c08848" stroke-width="1.400" fill="none"/><path d="M12 12 L17 17 M16 9 L21 14 M20 6.500 L25 11 M9 16 L13 20" stroke="#d89858" stroke-width="2"/></svg>
<span class="tx mn" style="left:835.05px;top:1042.08px;font-size:23.5px;line-height:30.55px;font-weight:400;color:#fff;transform:scaleX(0.9527);"><u>R</u>egex</span>
<span class="tx mn" style="left:908.07px;top:1042.08px;font-size:23.5px;line-height:30.55px;font-weight:400;color:#fff;transform:scaleX(0.9312);">Fre<u>e</u></span>
<span class="tx mn" style="left:961.46px;top:1042.08px;font-size:23.5px;line-height:30.55px;font-weight:400;color:#fff;transform:scaleX(1.0405);"><u>D</u>ot</span>
<span class="tx mn" style="left:1008.61px;top:1042.08px;font-size:23.5px;line-height:30.55px;font-weight:400;color:#fff;transform:scaleX(0.8924);"><u>C</u>ase</span>
<span class="tx mn" style="left:1067.00px;top:1042.08px;font-size:23.5px;line-height:30.55px;font-weight:400;color:#fff;transform:scaleX(0.9938);"><u>A</u>dapt</span>
<span class="tx mn" style="left:1138.00px;top:1042.08px;font-size:23.5px;line-height:30.55px;font-weight:400;color:#fff;transform:scaleX(0.9817);"><u>W</u>ords</span>
<span class="tx mn" style="left:1212.05px;top:1042.08px;font-size:23.5px;line-height:30.55px;font-weight:400;color:#fff;transform:scaleX(0.9506);"><u>F</u>iles</span>
<span class="tx mn" style="left:1268.03px;top:1042.08px;font-size:23.5px;line-height:30.55px;font-weight:400;color:#fff;transform:scaleX(0.9743);"><u>P</u>rojects</span>
<span class="tx mn" style="left:1359.02px;top:1042.08px;font-size:23.5px;line-height:30.55px;font-weight:400;color:#fff;transform:scaleX(0.9848);">Cl<u>o</u>sed</span>
<span class="tx mn" style="left:1438.52px;top:1042.08px;font-size:23.5px;line-height:30.55px;font-weight:400;color:#7a7a7a;transform:scaleX(0.9786);"><u>B</u>lock</span>
<span class="tx mn" style="left:1503.49px;top:1042.08px;font-size:23.5px;line-height:30.55px;font-weight:400;color:#fff;transform:scaleX(1.0057);"><u>L</u>oop</span>
<span class="tx mn" style="left:1565.04px;top:1042.08px;font-size:23.5px;line-height:30.55px;font-weight:400;color:#fff;transform:scaleX(0.9571);">Li<u>n</u>e</span>
<span class="tx mn" style="left:1615.42px;top:1042.08px;font-size:23.5px;line-height:30.55px;font-weight:400;color:#fff;transform:scaleX(1.0394);"><u>I</u>nvert</span>
<div style="left:2px;top:1130px;width:946px;height:257px;border:2px solid #666;background:#000"></div>
<div style="left:960px;top:1130px;width:946px;height:257px;border:2px solid #666;background:#000"></div>
<span class="tx " style="left:11.50px;top:1139.99px;font-size:26.1px;line-height:33.93px;font-weight:400;color:#fff;transform:scaleX(1.0472);">reg</span>
<div style="left:51px;top:1137px;width:8px;height:36px;background:#4aa22c;"></div>
<span class="tx " style="left:51.00px;top:1139.99px;font-size:26.1px;line-height:33.93px;font-weight:400;color:#fff;transform:scaleX(0.9192);">(</span>
<span class="tx " style="left:59.00px;top:1139.99px;font-size:26.1px;line-height:33.93px;font-weight:400;color:#fff;transform:scaleX(0.9768);">ular·expressions</span>
<div style="left:246px;top:1137px;width:12px;height:36px;background:#4688c8;"></div>
<span class="tx " style="left:246.00px;top:1139.99px;font-size:26.1px;line-height:33.93px;font-weight:400;color:#fff;transform:scaleX(0.8267);">?</span>
<div style="left:258px;top:1137px;width:6px;height:36px;background:#4aa22c;"></div>
<span class="tx " style="left:258.00px;top:1139.99px;font-size:26.1px;line-height:33.93px;font-weight:400;color:#fff;transform:scaleX(0.8848);">|</span>
<span class="tx " style="left:264.00px;top:1139.99px;font-size:26.1px;line-height:33.93px;font-weight:400;color:#fff;transform:scaleX(0.9433);">ex</span>
<div style="left:290px;top:1137px;width:8px;height:36px;background:#2a5a1a;"></div>
<span class="tx " style="left:290.00px;top:1139.99px;font-size:26.1px;line-height:33.93px;font-weight:400;color:#fff;transform:scaleX(0.9192);">(</span>
<span class="tx " style="left:298.00px;top:1139.99px;font-size:26.1px;line-height:33.93px;font-weight:400;color:#fff;transform:scaleX(1.1023);">p</span>
<div style="left:314px;top:1137px;width:6px;height:36px;background:#2a5a1a;"></div>
<span class="tx " style="left:314.00px;top:1139.99px;font-size:26.1px;line-height:33.93px;font-weight:400;color:#fff;transform:scaleX(0.8848);">|</span>
<span class="tx " style="left:320.00px;top:1139.99px;font-size:26.1px;line-height:33.93px;font-weight:400;color:#fff;transform:scaleX(0.9070);">es</span>
<div style="left:345px;top:1137px;width:8px;height:36px;background:#2a5a1a;"></div>
<span class="tx " style="left:345.00px;top:1139.99px;font-size:26.1px;line-height:33.93px;font-weight:400;color:#fff;transform:scaleX(0.9192);">)</span>
<div style="left:353px;top:1137px;width:12px;height:36px;background:#4688c8;"></div>
<span class="tx " style="left:353.00px;top:1139.99px;font-size:26.1px;line-height:33.93px;font-weight:400;color:#fff;transform:scaleX(0.8267);">?</span>
<div style="left:365px;top:1137px;width:8px;height:36px;background:#4aa22c;"></div>
<span class="tx " style="left:365.00px;top:1139.99px;font-size:26.1px;line-height:33.93px;font-weight:400;color:#fff;transform:scaleX(0.9192);">)</span>
<span class="tx " style="left:970.00px;top:1139.49px;font-size:26.1px;line-height:33.93px;font-weight:400;color:#fff;transform:scaleX(1.0047);">replacement·text</span>
<div style="left:0px;top:1397px;width:1914px;height:1px;background:#383838;"></div>
<div style="left:202px;top:1398px;width:1px;height:37px;background:#333;"></div>
<div style="left:205px;top:1398px;width:1px;height:37px;background:#333;"></div>
<div style="left:324px;top:1398px;width:1px;height:37px;background:#333;"></div>
<div style="left:327px;top:1398px;width:1px;height:37px;background:#333;"></div>
<div style="left:439px;top:1398px;width:1px;height:37px;background:#333;"></div>
<div style="left:442px;top:1398px;width:1px;height:37px;background:#333;"></div>
<div style="left:606px;top:1398px;width:1px;height:37px;background:#333;"></div>
<div style="left:609px;top:1398px;width:1px;height:37px;background:#333;"></div>
<div style="left:814px;top:1398px;width:1px;height:37px;background:#333;"></div>
<div style="left:817px;top:1398px;width:1px;height:37px;background:#333;"></div>
<div style="left:915px;top:1398px;width:1px;height:37px;background:#333;"></div>
<div style="left:918px;top:1398px;width:1px;height:37px;background:#333;"></div>
<span class="tx " style="left:81.57px;top:1402.58px;font-size:23.5px;line-height:30.55px;font-weight:400;color:#fff;transform:scaleX(0.9292);">1: 1</span>
<span class="tx " style="left:352.47px;top:1402.58px;font-size:23.5px;line-height:30.55px;font-weight:400;color:#fff;transform:scaleX(1.0132);">Insert</span>
<span class="tx " style="left:497.64px;top:1402.58px;font-size:23.5px;line-height:30.55px;font-weight:400;color:#fff;transform:scaleX(0.8582);">CRLF</span>
<span class="tx " style="left:634.00px;top:1402.58px;font-size:23.5px;line-height:30.55px;font-weight:400;color:#fff;transform:scaleX(1.0093);">Windows 1252</span>
<span class="tx " style="left:849.73px;top:1402.58px;font-size:23.5px;line-height:30.55px;font-weight:400;color:#fff;transform:scaleX(1.2701);">---</span>
<div style="left:1906px;top:1424px;width:2px;height:2px;background:#4a4a4a;"></div>
<div style="left:1903px;top:1427px;width:2px;height:2px;background:#4a4a4a;"></div>
<div style="left:1906px;top:1427px;width:2px;height:2px;background:#4a4a4a;"></div>
<div style="left:1900px;top:1430px;width:2px;height:2px;background:#4a4a4a;"></div>
<div style="left:1903px;top:1430px;width:2px;height:2px;background:#4a4a4a;"></div>
<div style="left:1906px;top:1430px;width:2px;height:2px;background:#4a4a4a;"></div>
</div></body></html>
